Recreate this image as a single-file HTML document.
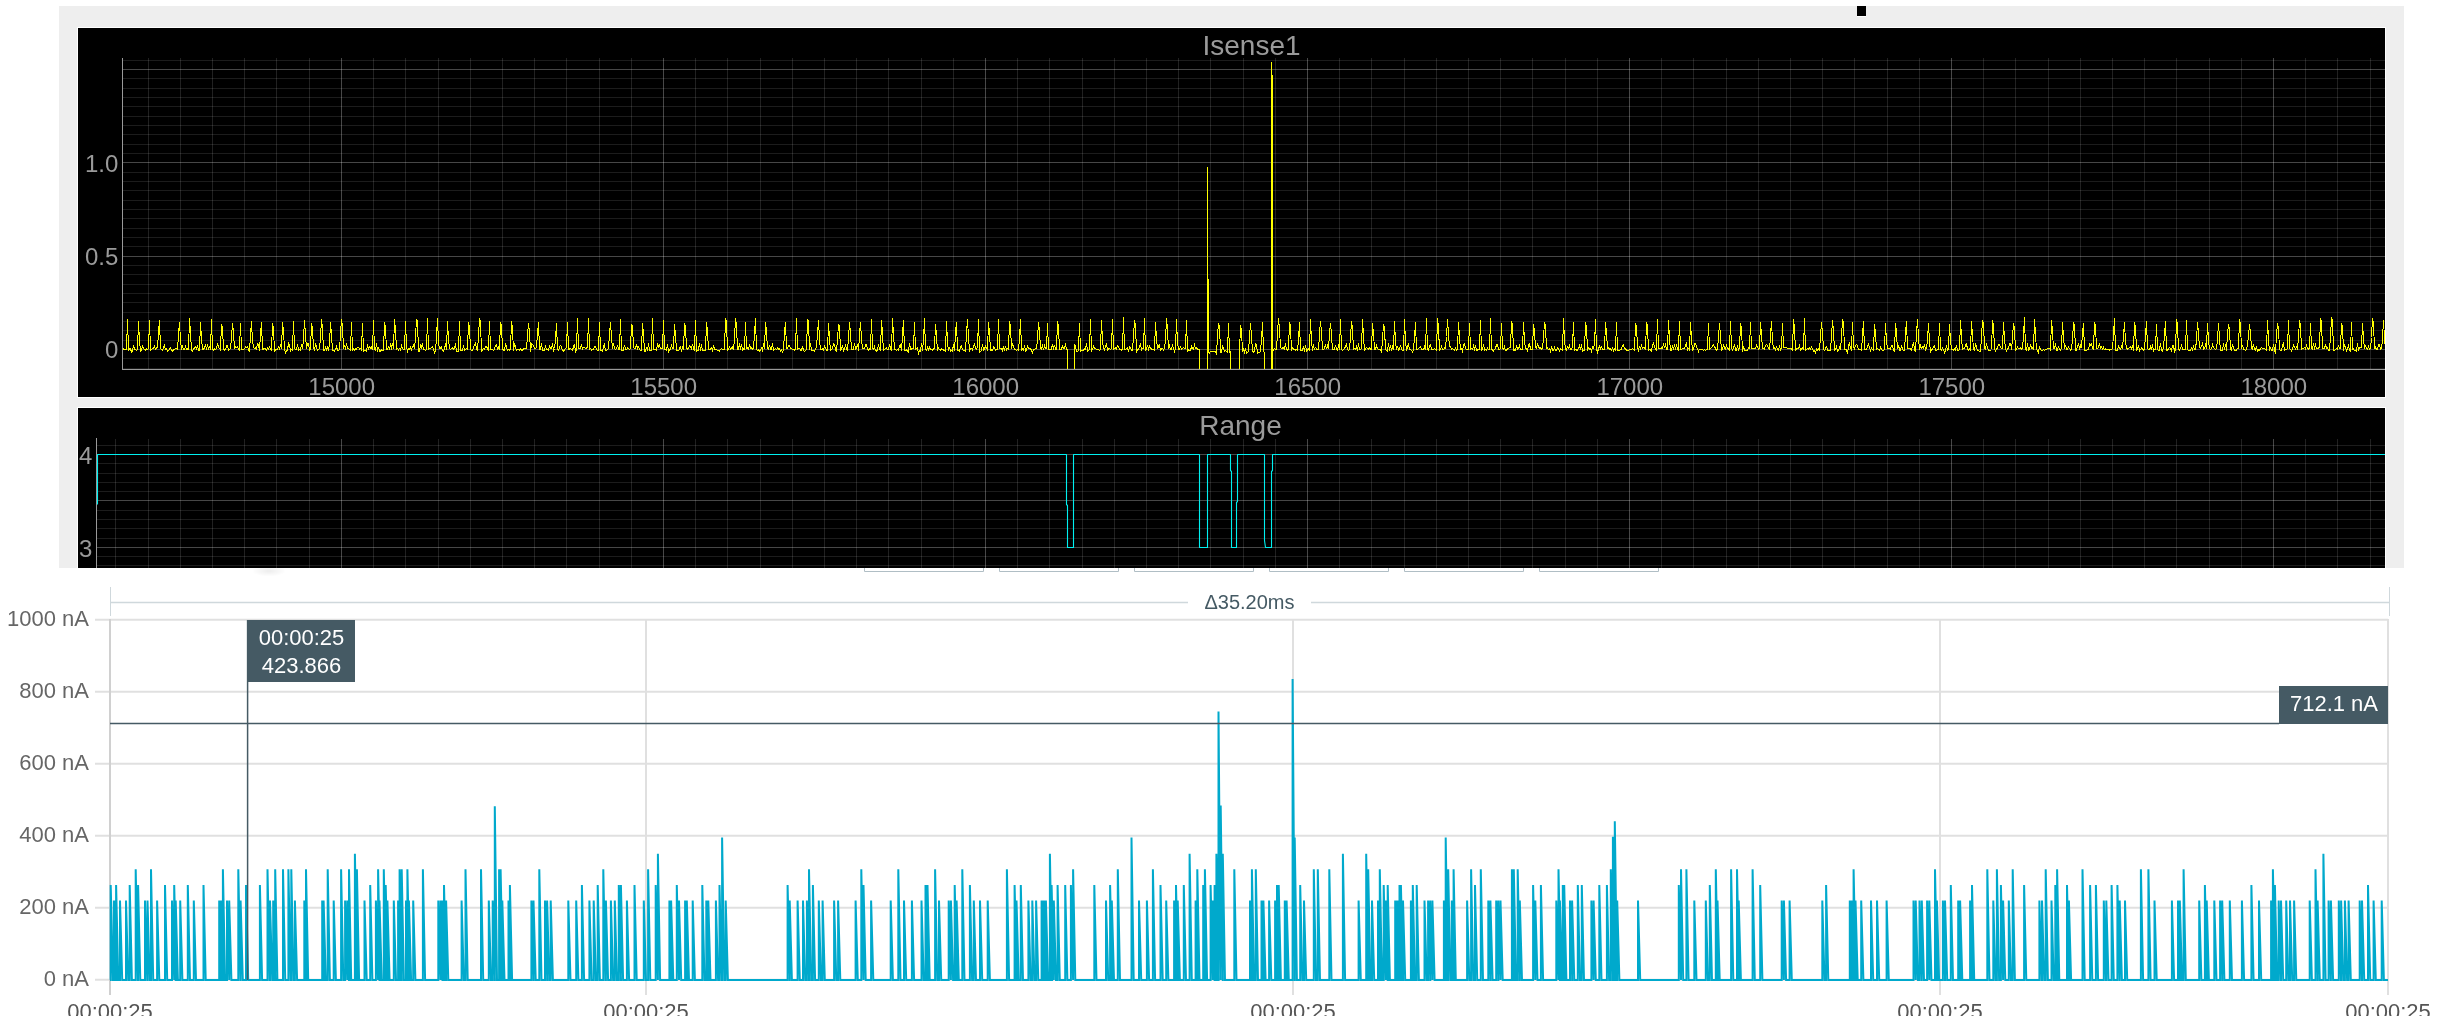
<!DOCTYPE html>
<html><head><meta charset="utf-8"><title>Isense1</title>
<style>html,body{margin:0;padding:0;background:#fff;width:2443px;height:1016px;overflow:hidden}svg{display:block;will-change:transform}</style>
</head><body><svg width="2443" height="1016" viewBox="0 0 2443 1016"><rect x="59" y="6" width="2345" height="562" fill="#eeeeee"/>
<rect x="1857" y="6" width="9" height="10" fill="#000"/>
<rect x="1857" y="16" width="9" height="1" fill="#fff"/>
<rect x="77" y="27" width="2309" height="371" fill="#ffffff"/>
<rect x="78" y="28" width="2307" height="369" fill="#000000"/>
<rect x="77" y="407" width="2309" height="161" fill="#ffffff"/>
<rect x="78" y="408" width="2307" height="160" fill="#000000"/>
<line x1="122.4" x2="2385" y1="368.5" y2="368.5" stroke="rgba(255,255,255,0.11)" stroke-width="1"/>
<line x1="122.4" x2="2385" y1="358.5" y2="358.5" stroke="rgba(255,255,255,0.11)" stroke-width="1"/>
<line x1="122.4" x2="2385" y1="340.5" y2="340.5" stroke="rgba(255,255,255,0.11)" stroke-width="1"/>
<line x1="122.4" x2="2385" y1="330.5" y2="330.5" stroke="rgba(255,255,255,0.11)" stroke-width="1"/>
<line x1="122.4" x2="2385" y1="321.5" y2="321.5" stroke="rgba(255,255,255,0.11)" stroke-width="1"/>
<line x1="122.4" x2="2385" y1="312.5" y2="312.5" stroke="rgba(255,255,255,0.11)" stroke-width="1"/>
<line x1="122.4" x2="2385" y1="302.5" y2="302.5" stroke="rgba(255,255,255,0.11)" stroke-width="1"/>
<line x1="122.4" x2="2385" y1="293.5" y2="293.5" stroke="rgba(255,255,255,0.11)" stroke-width="1"/>
<line x1="122.4" x2="2385" y1="284.5" y2="284.5" stroke="rgba(255,255,255,0.11)" stroke-width="1"/>
<line x1="122.4" x2="2385" y1="274.5" y2="274.5" stroke="rgba(255,255,255,0.11)" stroke-width="1"/>
<line x1="122.4" x2="2385" y1="265.5" y2="265.5" stroke="rgba(255,255,255,0.11)" stroke-width="1"/>
<line x1="122.4" x2="2385" y1="246.5" y2="246.5" stroke="rgba(255,255,255,0.11)" stroke-width="1"/>
<line x1="122.4" x2="2385" y1="237.5" y2="237.5" stroke="rgba(255,255,255,0.11)" stroke-width="1"/>
<line x1="122.4" x2="2385" y1="228.5" y2="228.5" stroke="rgba(255,255,255,0.11)" stroke-width="1"/>
<line x1="122.4" x2="2385" y1="218.5" y2="218.5" stroke="rgba(255,255,255,0.11)" stroke-width="1"/>
<line x1="122.4" x2="2385" y1="209.5" y2="209.5" stroke="rgba(255,255,255,0.11)" stroke-width="1"/>
<line x1="122.4" x2="2385" y1="200.5" y2="200.5" stroke="rgba(255,255,255,0.11)" stroke-width="1"/>
<line x1="122.4" x2="2385" y1="190.5" y2="190.5" stroke="rgba(255,255,255,0.11)" stroke-width="1"/>
<line x1="122.4" x2="2385" y1="181.5" y2="181.5" stroke="rgba(255,255,255,0.11)" stroke-width="1"/>
<line x1="122.4" x2="2385" y1="172.5" y2="172.5" stroke="rgba(255,255,255,0.11)" stroke-width="1"/>
<line x1="122.4" x2="2385" y1="153.5" y2="153.5" stroke="rgba(255,255,255,0.11)" stroke-width="1"/>
<line x1="122.4" x2="2385" y1="144.5" y2="144.5" stroke="rgba(255,255,255,0.11)" stroke-width="1"/>
<line x1="122.4" x2="2385" y1="134.5" y2="134.5" stroke="rgba(255,255,255,0.11)" stroke-width="1"/>
<line x1="122.4" x2="2385" y1="125.5" y2="125.5" stroke="rgba(255,255,255,0.11)" stroke-width="1"/>
<line x1="122.4" x2="2385" y1="116.5" y2="116.5" stroke="rgba(255,255,255,0.11)" stroke-width="1"/>
<line x1="122.4" x2="2385" y1="106.5" y2="106.5" stroke="rgba(255,255,255,0.11)" stroke-width="1"/>
<line x1="122.4" x2="2385" y1="97.5" y2="97.5" stroke="rgba(255,255,255,0.11)" stroke-width="1"/>
<line x1="122.4" x2="2385" y1="88.5" y2="88.5" stroke="rgba(255,255,255,0.11)" stroke-width="1"/>
<line x1="122.4" x2="2385" y1="78.5" y2="78.5" stroke="rgba(255,255,255,0.11)" stroke-width="1"/>
<line x1="122.4" x2="2385" y1="60.5" y2="60.5" stroke="rgba(255,255,255,0.11)" stroke-width="1"/>
<line x1="148.5" x2="148.5" y1="58" y2="369.4" stroke="rgba(255,255,255,0.13)" stroke-width="1"/>
<line x1="180.5" x2="180.5" y1="58" y2="369.4" stroke="rgba(255,255,255,0.13)" stroke-width="1"/>
<line x1="212.5" x2="212.5" y1="58" y2="369.4" stroke="rgba(255,255,255,0.13)" stroke-width="1"/>
<line x1="244.5" x2="244.5" y1="58" y2="369.4" stroke="rgba(255,255,255,0.13)" stroke-width="1"/>
<line x1="276.5" x2="276.5" y1="58" y2="369.4" stroke="rgba(255,255,255,0.13)" stroke-width="1"/>
<line x1="309.5" x2="309.5" y1="58" y2="369.4" stroke="rgba(255,255,255,0.13)" stroke-width="1"/>
<line x1="373.5" x2="373.5" y1="58" y2="369.4" stroke="rgba(255,255,255,0.13)" stroke-width="1"/>
<line x1="405.5" x2="405.5" y1="58" y2="369.4" stroke="rgba(255,255,255,0.13)" stroke-width="1"/>
<line x1="438.5" x2="438.5" y1="58" y2="369.4" stroke="rgba(255,255,255,0.13)" stroke-width="1"/>
<line x1="470.5" x2="470.5" y1="58" y2="369.4" stroke="rgba(255,255,255,0.13)" stroke-width="1"/>
<line x1="502.5" x2="502.5" y1="58" y2="369.4" stroke="rgba(255,255,255,0.13)" stroke-width="1"/>
<line x1="534.5" x2="534.5" y1="58" y2="369.4" stroke="rgba(255,255,255,0.13)" stroke-width="1"/>
<line x1="566.5" x2="566.5" y1="58" y2="369.4" stroke="rgba(255,255,255,0.13)" stroke-width="1"/>
<line x1="599.5" x2="599.5" y1="58" y2="369.4" stroke="rgba(255,255,255,0.13)" stroke-width="1"/>
<line x1="631.5" x2="631.5" y1="58" y2="369.4" stroke="rgba(255,255,255,0.13)" stroke-width="1"/>
<line x1="695.5" x2="695.5" y1="58" y2="369.4" stroke="rgba(255,255,255,0.13)" stroke-width="1"/>
<line x1="727.5" x2="727.5" y1="58" y2="369.4" stroke="rgba(255,255,255,0.13)" stroke-width="1"/>
<line x1="760.5" x2="760.5" y1="58" y2="369.4" stroke="rgba(255,255,255,0.13)" stroke-width="1"/>
<line x1="792.5" x2="792.5" y1="58" y2="369.4" stroke="rgba(255,255,255,0.13)" stroke-width="1"/>
<line x1="824.5" x2="824.5" y1="58" y2="369.4" stroke="rgba(255,255,255,0.13)" stroke-width="1"/>
<line x1="856.5" x2="856.5" y1="58" y2="369.4" stroke="rgba(255,255,255,0.13)" stroke-width="1"/>
<line x1="888.5" x2="888.5" y1="58" y2="369.4" stroke="rgba(255,255,255,0.13)" stroke-width="1"/>
<line x1="921.5" x2="921.5" y1="58" y2="369.4" stroke="rgba(255,255,255,0.13)" stroke-width="1"/>
<line x1="953.5" x2="953.5" y1="58" y2="369.4" stroke="rgba(255,255,255,0.13)" stroke-width="1"/>
<line x1="1017.5" x2="1017.5" y1="58" y2="369.4" stroke="rgba(255,255,255,0.13)" stroke-width="1"/>
<line x1="1049.5" x2="1049.5" y1="58" y2="369.4" stroke="rgba(255,255,255,0.13)" stroke-width="1"/>
<line x1="1082.5" x2="1082.5" y1="58" y2="369.4" stroke="rgba(255,255,255,0.13)" stroke-width="1"/>
<line x1="1114.5" x2="1114.5" y1="58" y2="369.4" stroke="rgba(255,255,255,0.13)" stroke-width="1"/>
<line x1="1146.5" x2="1146.5" y1="58" y2="369.4" stroke="rgba(255,255,255,0.13)" stroke-width="1"/>
<line x1="1178.5" x2="1178.5" y1="58" y2="369.4" stroke="rgba(255,255,255,0.13)" stroke-width="1"/>
<line x1="1210.5" x2="1210.5" y1="58" y2="369.4" stroke="rgba(255,255,255,0.13)" stroke-width="1"/>
<line x1="1243.5" x2="1243.5" y1="58" y2="369.4" stroke="rgba(255,255,255,0.13)" stroke-width="1"/>
<line x1="1275.5" x2="1275.5" y1="58" y2="369.4" stroke="rgba(255,255,255,0.13)" stroke-width="1"/>
<line x1="1339.5" x2="1339.5" y1="58" y2="369.4" stroke="rgba(255,255,255,0.13)" stroke-width="1"/>
<line x1="1371.5" x2="1371.5" y1="58" y2="369.4" stroke="rgba(255,255,255,0.13)" stroke-width="1"/>
<line x1="1404.5" x2="1404.5" y1="58" y2="369.4" stroke="rgba(255,255,255,0.13)" stroke-width="1"/>
<line x1="1436.5" x2="1436.5" y1="58" y2="369.4" stroke="rgba(255,255,255,0.13)" stroke-width="1"/>
<line x1="1468.5" x2="1468.5" y1="58" y2="369.4" stroke="rgba(255,255,255,0.13)" stroke-width="1"/>
<line x1="1500.5" x2="1500.5" y1="58" y2="369.4" stroke="rgba(255,255,255,0.13)" stroke-width="1"/>
<line x1="1532.5" x2="1532.5" y1="58" y2="369.4" stroke="rgba(255,255,255,0.13)" stroke-width="1"/>
<line x1="1565.5" x2="1565.5" y1="58" y2="369.4" stroke="rgba(255,255,255,0.13)" stroke-width="1"/>
<line x1="1597.5" x2="1597.5" y1="58" y2="369.4" stroke="rgba(255,255,255,0.13)" stroke-width="1"/>
<line x1="1661.5" x2="1661.5" y1="58" y2="369.4" stroke="rgba(255,255,255,0.13)" stroke-width="1"/>
<line x1="1693.5" x2="1693.5" y1="58" y2="369.4" stroke="rgba(255,255,255,0.13)" stroke-width="1"/>
<line x1="1726.5" x2="1726.5" y1="58" y2="369.4" stroke="rgba(255,255,255,0.13)" stroke-width="1"/>
<line x1="1758.5" x2="1758.5" y1="58" y2="369.4" stroke="rgba(255,255,255,0.13)" stroke-width="1"/>
<line x1="1790.5" x2="1790.5" y1="58" y2="369.4" stroke="rgba(255,255,255,0.13)" stroke-width="1"/>
<line x1="1822.5" x2="1822.5" y1="58" y2="369.4" stroke="rgba(255,255,255,0.13)" stroke-width="1"/>
<line x1="1854.5" x2="1854.5" y1="58" y2="369.4" stroke="rgba(255,255,255,0.13)" stroke-width="1"/>
<line x1="1887.5" x2="1887.5" y1="58" y2="369.4" stroke="rgba(255,255,255,0.13)" stroke-width="1"/>
<line x1="1919.5" x2="1919.5" y1="58" y2="369.4" stroke="rgba(255,255,255,0.13)" stroke-width="1"/>
<line x1="1983.5" x2="1983.5" y1="58" y2="369.4" stroke="rgba(255,255,255,0.13)" stroke-width="1"/>
<line x1="2015.5" x2="2015.5" y1="58" y2="369.4" stroke="rgba(255,255,255,0.13)" stroke-width="1"/>
<line x1="2048.5" x2="2048.5" y1="58" y2="369.4" stroke="rgba(255,255,255,0.13)" stroke-width="1"/>
<line x1="2080.5" x2="2080.5" y1="58" y2="369.4" stroke="rgba(255,255,255,0.13)" stroke-width="1"/>
<line x1="2112.5" x2="2112.5" y1="58" y2="369.4" stroke="rgba(255,255,255,0.13)" stroke-width="1"/>
<line x1="2144.5" x2="2144.5" y1="58" y2="369.4" stroke="rgba(255,255,255,0.13)" stroke-width="1"/>
<line x1="2176.5" x2="2176.5" y1="58" y2="369.4" stroke="rgba(255,255,255,0.13)" stroke-width="1"/>
<line x1="2209.5" x2="2209.5" y1="58" y2="369.4" stroke="rgba(255,255,255,0.13)" stroke-width="1"/>
<line x1="2241.5" x2="2241.5" y1="58" y2="369.4" stroke="rgba(255,255,255,0.13)" stroke-width="1"/>
<line x1="2305.5" x2="2305.5" y1="58" y2="369.4" stroke="rgba(255,255,255,0.13)" stroke-width="1"/>
<line x1="2337.5" x2="2337.5" y1="58" y2="369.4" stroke="rgba(255,255,255,0.13)" stroke-width="1"/>
<line x1="2370.5" x2="2370.5" y1="58" y2="369.4" stroke="rgba(255,255,255,0.13)" stroke-width="1"/>
<line x1="122.4" x2="2385" y1="349.5" y2="349.5" stroke="rgba(255,255,255,0.28)" stroke-width="1"/>
<line x1="122.4" x2="2385" y1="256.5" y2="256.5" stroke="rgba(255,255,255,0.28)" stroke-width="1"/>
<line x1="122.4" x2="2385" y1="162.5" y2="162.5" stroke="rgba(255,255,255,0.28)" stroke-width="1"/>
<line x1="122.4" x2="2385" y1="69.5" y2="69.5" stroke="rgba(255,255,255,0.28)" stroke-width="1"/>
<line x1="341.5" x2="341.5" y1="58" y2="369.4" stroke="rgba(255,255,255,0.28)" stroke-width="1"/>
<line x1="663.5" x2="663.5" y1="58" y2="369.4" stroke="rgba(255,255,255,0.28)" stroke-width="1"/>
<line x1="985.5" x2="985.5" y1="58" y2="369.4" stroke="rgba(255,255,255,0.28)" stroke-width="1"/>
<line x1="1307.5" x2="1307.5" y1="58" y2="369.4" stroke="rgba(255,255,255,0.28)" stroke-width="1"/>
<line x1="1629.5" x2="1629.5" y1="58" y2="369.4" stroke="rgba(255,255,255,0.28)" stroke-width="1"/>
<line x1="1951.5" x2="1951.5" y1="58" y2="369.4" stroke="rgba(255,255,255,0.28)" stroke-width="1"/>
<line x1="2273.5" x2="2273.5" y1="58" y2="369.4" stroke="rgba(255,255,255,0.28)" stroke-width="1"/>
<line x1="122.5" x2="122.5" y1="58" y2="370" stroke="#9a9a9a" stroke-width="1"/>
<line x1="122" x2="2385" y1="369.5" y2="369.5" stroke="#9a9a9a" stroke-width="1"/>
<line x1="96.4" x2="2385" y1="565.5" y2="565.5" stroke="rgba(255,255,255,0.11)" stroke-width="1"/>
<line x1="96.4" x2="2385" y1="556.5" y2="556.5" stroke="rgba(255,255,255,0.11)" stroke-width="1"/>
<line x1="96.4" x2="2385" y1="538.5" y2="538.5" stroke="rgba(255,255,255,0.11)" stroke-width="1"/>
<line x1="96.4" x2="2385" y1="528.5" y2="528.5" stroke="rgba(255,255,255,0.11)" stroke-width="1"/>
<line x1="96.4" x2="2385" y1="519.5" y2="519.5" stroke="rgba(255,255,255,0.11)" stroke-width="1"/>
<line x1="96.4" x2="2385" y1="510.5" y2="510.5" stroke="rgba(255,255,255,0.11)" stroke-width="1"/>
<line x1="96.4" x2="2385" y1="491.5" y2="491.5" stroke="rgba(255,255,255,0.11)" stroke-width="1"/>
<line x1="96.4" x2="2385" y1="482.5" y2="482.5" stroke="rgba(255,255,255,0.11)" stroke-width="1"/>
<line x1="96.4" x2="2385" y1="473.5" y2="473.5" stroke="rgba(255,255,255,0.11)" stroke-width="1"/>
<line x1="96.4" x2="2385" y1="463.5" y2="463.5" stroke="rgba(255,255,255,0.11)" stroke-width="1"/>
<line x1="96.4" x2="2385" y1="445.5" y2="445.5" stroke="rgba(255,255,255,0.11)" stroke-width="1"/>
<line x1="115.5" x2="115.5" y1="439" y2="568" stroke="rgba(255,255,255,0.13)" stroke-width="1"/>
<line x1="148.5" x2="148.5" y1="439" y2="568" stroke="rgba(255,255,255,0.13)" stroke-width="1"/>
<line x1="180.5" x2="180.5" y1="439" y2="568" stroke="rgba(255,255,255,0.13)" stroke-width="1"/>
<line x1="212.5" x2="212.5" y1="439" y2="568" stroke="rgba(255,255,255,0.13)" stroke-width="1"/>
<line x1="244.5" x2="244.5" y1="439" y2="568" stroke="rgba(255,255,255,0.13)" stroke-width="1"/>
<line x1="276.5" x2="276.5" y1="439" y2="568" stroke="rgba(255,255,255,0.13)" stroke-width="1"/>
<line x1="309.5" x2="309.5" y1="439" y2="568" stroke="rgba(255,255,255,0.13)" stroke-width="1"/>
<line x1="373.5" x2="373.5" y1="439" y2="568" stroke="rgba(255,255,255,0.13)" stroke-width="1"/>
<line x1="405.5" x2="405.5" y1="439" y2="568" stroke="rgba(255,255,255,0.13)" stroke-width="1"/>
<line x1="438.5" x2="438.5" y1="439" y2="568" stroke="rgba(255,255,255,0.13)" stroke-width="1"/>
<line x1="470.5" x2="470.5" y1="439" y2="568" stroke="rgba(255,255,255,0.13)" stroke-width="1"/>
<line x1="502.5" x2="502.5" y1="439" y2="568" stroke="rgba(255,255,255,0.13)" stroke-width="1"/>
<line x1="534.5" x2="534.5" y1="439" y2="568" stroke="rgba(255,255,255,0.13)" stroke-width="1"/>
<line x1="566.5" x2="566.5" y1="439" y2="568" stroke="rgba(255,255,255,0.13)" stroke-width="1"/>
<line x1="599.5" x2="599.5" y1="439" y2="568" stroke="rgba(255,255,255,0.13)" stroke-width="1"/>
<line x1="631.5" x2="631.5" y1="439" y2="568" stroke="rgba(255,255,255,0.13)" stroke-width="1"/>
<line x1="695.5" x2="695.5" y1="439" y2="568" stroke="rgba(255,255,255,0.13)" stroke-width="1"/>
<line x1="727.5" x2="727.5" y1="439" y2="568" stroke="rgba(255,255,255,0.13)" stroke-width="1"/>
<line x1="760.5" x2="760.5" y1="439" y2="568" stroke="rgba(255,255,255,0.13)" stroke-width="1"/>
<line x1="792.5" x2="792.5" y1="439" y2="568" stroke="rgba(255,255,255,0.13)" stroke-width="1"/>
<line x1="824.5" x2="824.5" y1="439" y2="568" stroke="rgba(255,255,255,0.13)" stroke-width="1"/>
<line x1="856.5" x2="856.5" y1="439" y2="568" stroke="rgba(255,255,255,0.13)" stroke-width="1"/>
<line x1="888.5" x2="888.5" y1="439" y2="568" stroke="rgba(255,255,255,0.13)" stroke-width="1"/>
<line x1="921.5" x2="921.5" y1="439" y2="568" stroke="rgba(255,255,255,0.13)" stroke-width="1"/>
<line x1="953.5" x2="953.5" y1="439" y2="568" stroke="rgba(255,255,255,0.13)" stroke-width="1"/>
<line x1="1017.5" x2="1017.5" y1="439" y2="568" stroke="rgba(255,255,255,0.13)" stroke-width="1"/>
<line x1="1049.5" x2="1049.5" y1="439" y2="568" stroke="rgba(255,255,255,0.13)" stroke-width="1"/>
<line x1="1082.5" x2="1082.5" y1="439" y2="568" stroke="rgba(255,255,255,0.13)" stroke-width="1"/>
<line x1="1114.5" x2="1114.5" y1="439" y2="568" stroke="rgba(255,255,255,0.13)" stroke-width="1"/>
<line x1="1146.5" x2="1146.5" y1="439" y2="568" stroke="rgba(255,255,255,0.13)" stroke-width="1"/>
<line x1="1178.5" x2="1178.5" y1="439" y2="568" stroke="rgba(255,255,255,0.13)" stroke-width="1"/>
<line x1="1210.5" x2="1210.5" y1="439" y2="568" stroke="rgba(255,255,255,0.13)" stroke-width="1"/>
<line x1="1243.5" x2="1243.5" y1="439" y2="568" stroke="rgba(255,255,255,0.13)" stroke-width="1"/>
<line x1="1275.5" x2="1275.5" y1="439" y2="568" stroke="rgba(255,255,255,0.13)" stroke-width="1"/>
<line x1="1339.5" x2="1339.5" y1="439" y2="568" stroke="rgba(255,255,255,0.13)" stroke-width="1"/>
<line x1="1371.5" x2="1371.5" y1="439" y2="568" stroke="rgba(255,255,255,0.13)" stroke-width="1"/>
<line x1="1404.5" x2="1404.5" y1="439" y2="568" stroke="rgba(255,255,255,0.13)" stroke-width="1"/>
<line x1="1436.5" x2="1436.5" y1="439" y2="568" stroke="rgba(255,255,255,0.13)" stroke-width="1"/>
<line x1="1468.5" x2="1468.5" y1="439" y2="568" stroke="rgba(255,255,255,0.13)" stroke-width="1"/>
<line x1="1500.5" x2="1500.5" y1="439" y2="568" stroke="rgba(255,255,255,0.13)" stroke-width="1"/>
<line x1="1532.5" x2="1532.5" y1="439" y2="568" stroke="rgba(255,255,255,0.13)" stroke-width="1"/>
<line x1="1565.5" x2="1565.5" y1="439" y2="568" stroke="rgba(255,255,255,0.13)" stroke-width="1"/>
<line x1="1597.5" x2="1597.5" y1="439" y2="568" stroke="rgba(255,255,255,0.13)" stroke-width="1"/>
<line x1="1661.5" x2="1661.5" y1="439" y2="568" stroke="rgba(255,255,255,0.13)" stroke-width="1"/>
<line x1="1693.5" x2="1693.5" y1="439" y2="568" stroke="rgba(255,255,255,0.13)" stroke-width="1"/>
<line x1="1726.5" x2="1726.5" y1="439" y2="568" stroke="rgba(255,255,255,0.13)" stroke-width="1"/>
<line x1="1758.5" x2="1758.5" y1="439" y2="568" stroke="rgba(255,255,255,0.13)" stroke-width="1"/>
<line x1="1790.5" x2="1790.5" y1="439" y2="568" stroke="rgba(255,255,255,0.13)" stroke-width="1"/>
<line x1="1822.5" x2="1822.5" y1="439" y2="568" stroke="rgba(255,255,255,0.13)" stroke-width="1"/>
<line x1="1854.5" x2="1854.5" y1="439" y2="568" stroke="rgba(255,255,255,0.13)" stroke-width="1"/>
<line x1="1887.5" x2="1887.5" y1="439" y2="568" stroke="rgba(255,255,255,0.13)" stroke-width="1"/>
<line x1="1919.5" x2="1919.5" y1="439" y2="568" stroke="rgba(255,255,255,0.13)" stroke-width="1"/>
<line x1="1983.5" x2="1983.5" y1="439" y2="568" stroke="rgba(255,255,255,0.13)" stroke-width="1"/>
<line x1="2015.5" x2="2015.5" y1="439" y2="568" stroke="rgba(255,255,255,0.13)" stroke-width="1"/>
<line x1="2048.5" x2="2048.5" y1="439" y2="568" stroke="rgba(255,255,255,0.13)" stroke-width="1"/>
<line x1="2080.5" x2="2080.5" y1="439" y2="568" stroke="rgba(255,255,255,0.13)" stroke-width="1"/>
<line x1="2112.5" x2="2112.5" y1="439" y2="568" stroke="rgba(255,255,255,0.13)" stroke-width="1"/>
<line x1="2144.5" x2="2144.5" y1="439" y2="568" stroke="rgba(255,255,255,0.13)" stroke-width="1"/>
<line x1="2176.5" x2="2176.5" y1="439" y2="568" stroke="rgba(255,255,255,0.13)" stroke-width="1"/>
<line x1="2209.5" x2="2209.5" y1="439" y2="568" stroke="rgba(255,255,255,0.13)" stroke-width="1"/>
<line x1="2241.5" x2="2241.5" y1="439" y2="568" stroke="rgba(255,255,255,0.13)" stroke-width="1"/>
<line x1="2305.5" x2="2305.5" y1="439" y2="568" stroke="rgba(255,255,255,0.13)" stroke-width="1"/>
<line x1="2337.5" x2="2337.5" y1="439" y2="568" stroke="rgba(255,255,255,0.13)" stroke-width="1"/>
<line x1="2370.5" x2="2370.5" y1="439" y2="568" stroke="rgba(255,255,255,0.13)" stroke-width="1"/>
<line x1="96.4" x2="2385" y1="547.5" y2="547.5" stroke="rgba(255,255,255,0.28)" stroke-width="1"/>
<line x1="96.4" x2="2385" y1="500.5" y2="500.5" stroke="rgba(255,255,255,0.28)" stroke-width="1"/>
<line x1="96.4" x2="2385" y1="454.5" y2="454.5" stroke="rgba(255,255,255,0.28)" stroke-width="1"/>
<line x1="341.5" x2="341.5" y1="439" y2="568" stroke="rgba(255,255,255,0.28)" stroke-width="1"/>
<line x1="663.5" x2="663.5" y1="439" y2="568" stroke="rgba(255,255,255,0.28)" stroke-width="1"/>
<line x1="985.5" x2="985.5" y1="439" y2="568" stroke="rgba(255,255,255,0.28)" stroke-width="1"/>
<line x1="1307.5" x2="1307.5" y1="439" y2="568" stroke="rgba(255,255,255,0.28)" stroke-width="1"/>
<line x1="1629.5" x2="1629.5" y1="439" y2="568" stroke="rgba(255,255,255,0.28)" stroke-width="1"/>
<line x1="1951.5" x2="1951.5" y1="439" y2="568" stroke="rgba(255,255,255,0.28)" stroke-width="1"/>
<line x1="2273.5" x2="2273.5" y1="439" y2="568" stroke="rgba(255,255,255,0.28)" stroke-width="1"/>
<line x1="96.5" x2="96.5" y1="438" y2="568" stroke="#9a9a9a" stroke-width="1"/>
<clipPath id="c1"><rect x="123" y="28" width="2262" height="341"/></clipPath>
<path clip-path="url(#c1)" fill="none" stroke="#ffff00" stroke-width="1" shape-rendering="crispEdges" d="M122.5,351.3 123.5,349.0 124.5,349.4 125.5,349.3 126.5,349.6 127.5,319.5 128.5,350.2 129.5,348.6 130.5,348.6 131.5,352.3 132.5,350.5 133.5,345.0 134.5,349.5 135.5,349.6 136.5,350.4 137.5,349.3 138.5,320.6 139.5,341.4 140.5,351.1 141.5,349.8 142.5,346.3 143.5,348.4 144.5,349.6 145.5,350.1 146.5,348.8 147.5,349.4 148.5,348.8 149.5,319.9 150.5,350.6 151.5,349.6 152.5,348.1 153.5,348.2 154.5,345.9 155.5,349.3 156.5,348.8 157.5,346.4 158.5,333.1 159.5,319.7 160.5,348.4 161.5,349.3 162.5,350.4 163.5,347.7 164.5,345.6 165.5,349.8 166.5,348.9 167.5,351.7 168.5,350.5 169.5,349.5 170.5,347.7 171.5,350.3 172.5,351.4 173.5,349.6 174.5,349.2 175.5,348.7 176.5,348.4 177.5,349.2 178.5,334.6 179.5,321.8 180.5,340.5 181.5,348.4 182.5,345.9 183.5,349.9 184.5,349.9 185.5,346.7 186.5,349.8 187.5,348.9 188.5,349.6 189.5,318.4 190.5,332.8 191.5,350.7 192.5,351.7 193.5,348.3 194.5,348.4 195.5,346.9 196.5,348.6 197.5,346.1 198.5,350.6 199.5,350.3 200.5,322.3 201.5,337.9 202.5,349.5 203.5,349.0 204.5,348.6 205.5,343.8 206.5,350.4 207.5,344.3 208.5,348.9 209.5,347.1 210.5,348.8 211.5,318.9 212.5,349.8 213.5,350.0 214.5,348.7 215.5,349.6 216.5,348.4 217.5,343.2 218.5,347.1 219.5,348.7 220.5,349.8 221.5,323.7 222.5,328.0 223.5,349.1 224.5,350.1 225.5,349.9 226.5,345.8 227.5,345.6 228.5,350.1 229.5,349.4 230.5,348.5 231.5,337.2 232.5,323.3 233.5,332.1 234.5,349.1 235.5,347.0 236.5,347.1 237.5,347.0 238.5,349.1 239.5,350.3 240.5,323.5 241.5,349.1 242.5,349.3 243.5,349.7 244.5,348.7 245.5,346.9 246.5,347.2 247.5,346.5 248.5,350.2 249.5,351.0 250.5,334.8 251.5,321.2 252.5,341.5 253.5,346.9 254.5,348.8 255.5,348.0 256.5,349.4 257.5,343.3 258.5,344.4 259.5,350.7 260.5,334.5 261.5,321.6 262.5,349.8 263.5,349.0 264.5,348.2 265.5,349.0 266.5,350.4 267.5,347.9 268.5,348.9 269.5,347.2 270.5,349.4 271.5,350.5 272.5,323.4 273.5,328.9 274.5,351.2 275.5,349.6 276.5,349.6 277.5,349.9 278.5,346.0 279.5,350.3 280.5,344.5 281.5,349.0 282.5,322.3 283.5,331.8 284.5,348.7 285.5,352.7 286.5,350.6 287.5,350.1 288.5,343.0 289.5,345.5 290.5,351.2 291.5,349.3 292.5,350.5 293.5,320.9 294.5,348.8 295.5,349.1 296.5,349.4 297.5,344.1 298.5,350.1 299.5,349.5 300.5,350.3 301.5,343.9 302.5,349.0 303.5,338.8 304.5,320.4 305.5,334.8 306.5,348.6 307.5,343.5 308.5,343.2 309.5,350.2 310.5,348.8 311.5,323.3 312.5,329.3 313.5,348.4 314.5,350.0 315.5,344.2 316.5,346.7 317.5,350.6 318.5,349.2 319.5,348.4 320.5,337.3 321.5,319.0 322.5,328.2 323.5,350.9 324.5,350.9 325.5,347.5 326.5,349.8 327.5,347.5 328.5,349.6 329.5,344.8 330.5,322.4 331.5,334.5 332.5,350.3 333.5,350.9 334.5,351.1 335.5,349.3 336.5,346.2 337.5,350.8 338.5,350.8 339.5,349.4 340.5,333.9 341.5,319.1 342.5,327.1 343.5,348.7 344.5,346.2 345.5,348.3 346.5,343.6 347.5,348.1 348.5,348.8 349.5,349.8 350.5,350.4 351.5,322.2 352.5,349.9 353.5,348.7 354.5,350.3 355.5,348.9 356.5,349.2 357.5,347.3 358.5,347.4 359.5,349.3 360.5,348.6 361.5,349.9 362.5,322.8 363.5,351.2 364.5,350.1 365.5,350.4 366.5,351.2 367.5,344.3 368.5,350.4 369.5,346.6 370.5,348.0 371.5,347.1 372.5,350.1 373.5,320.4 374.5,349.5 375.5,350.6 376.5,343.3 377.5,351.5 378.5,347.0 379.5,351.1 380.5,351.4 381.5,349.9 382.5,350.6 383.5,350.4 384.5,321.6 385.5,329.1 386.5,349.7 387.5,348.9 388.5,347.4 389.5,348.9 390.5,345.0 391.5,348.0 392.5,343.1 393.5,348.9 394.5,318.9 395.5,330.3 396.5,349.4 397.5,348.5 398.5,350.0 399.5,348.6 400.5,350.0 401.5,345.9 402.5,348.8 403.5,349.7 404.5,349.4 405.5,320.8 406.5,346.1 407.5,351.2 408.5,348.5 409.5,349.4 410.5,347.4 411.5,349.9 412.5,346.5 413.5,345.1 414.5,349.0 415.5,337.0 416.5,318.9 417.5,321.1 418.5,351.3 419.5,351.8 420.5,344.5 421.5,347.6 422.5,343.4 423.5,349.5 424.5,349.8 425.5,350.5 426.5,349.5 427.5,318.4 428.5,349.6 429.5,348.5 430.5,348.9 431.5,347.1 432.5,346.8 433.5,348.9 434.5,352.8 435.5,351.0 436.5,337.2 437.5,318.2 438.5,342.2 439.5,348.8 440.5,348.3 441.5,347.1 442.5,350.5 443.5,351.0 444.5,349.3 445.5,343.4 446.5,350.0 447.5,321.0 448.5,339.2 449.5,348.9 450.5,349.5 451.5,348.6 452.5,348.0 453.5,349.4 454.5,347.9 455.5,343.5 456.5,351.8 457.5,351.7 458.5,351.3 459.5,320.6 460.5,349.8 461.5,350.9 462.5,350.3 463.5,345.3 464.5,350.6 465.5,349.4 466.5,348.9 467.5,349.2 468.5,322.4 469.5,327.6 470.5,349.5 471.5,350.1 472.5,350.1 473.5,347.3 474.5,344.6 475.5,343.1 476.5,349.6 477.5,350.0 478.5,336.4 479.5,317.8 480.5,322.8 481.5,351.3 482.5,349.5 483.5,348.4 484.5,349.2 485.5,346.2 486.5,346.4 487.5,348.7 488.5,350.0 489.5,321.5 490.5,348.9 491.5,349.6 492.5,349.2 493.5,350.5 494.5,349.3 495.5,345.6 496.5,344.8 497.5,349.1 498.5,347.4 499.5,349.7 500.5,322.0 501.5,325.6 502.5,349.9 503.5,349.9 504.5,350.8 505.5,343.1 506.5,346.7 507.5,350.3 508.5,349.7 509.5,350.3 510.5,349.1 511.5,321.0 512.5,328.9 513.5,351.2 514.5,343.0 515.5,347.9 516.5,350.6 517.5,349.8 518.5,349.3 519.5,350.1 520.5,348.9 521.5,350.1 522.5,350.5 523.5,348.8 524.5,348.2 525.5,348.8 526.5,348.6 527.5,335.7 528.5,323.3 529.5,332.3 530.5,351.5 531.5,344.0 532.5,344.6 533.5,345.2 534.5,348.8 535.5,349.0 536.5,347.2 537.5,333.7 538.5,322.0 539.5,349.8 540.5,349.7 541.5,343.2 542.5,350.0 543.5,350.3 544.5,350.1 545.5,345.5 546.5,349.8 547.5,349.5 548.5,350.0 549.5,345.9 550.5,348.4 551.5,348.4 552.5,343.1 553.5,350.8 554.5,348.5 555.5,338.9 556.5,323.4 557.5,349.3 558.5,350.3 559.5,347.3 560.5,345.5 561.5,346.8 562.5,350.3 563.5,351.0 564.5,349.8 565.5,349.5 566.5,347.0 567.5,321.7 568.5,349.0 569.5,349.1 570.5,348.4 571.5,349.4 572.5,350.3 573.5,346.9 574.5,344.0 575.5,352.8 576.5,349.0 577.5,318.2 578.5,348.8 579.5,348.7 580.5,348.0 581.5,345.2 582.5,348.9 583.5,347.2 584.5,347.8 585.5,348.7 586.5,347.9 587.5,347.9 588.5,317.9 589.5,349.0 590.5,348.2 591.5,350.5 592.5,349.9 593.5,349.3 594.5,346.2 595.5,346.1 596.5,349.5 597.5,350.6 598.5,350.2 599.5,322.4 600.5,350.2 601.5,350.5 602.5,351.2 603.5,346.4 604.5,344.3 605.5,351.0 606.5,350.8 607.5,349.4 608.5,348.8 609.5,334.4 610.5,322.5 611.5,336.5 612.5,348.8 613.5,343.4 614.5,348.5 615.5,349.2 616.5,348.8 617.5,345.1 618.5,349.2 619.5,349.4 620.5,318.7 621.5,350.8 622.5,350.6 623.5,350.4 624.5,344.7 625.5,349.1 626.5,349.8 627.5,347.6 628.5,348.8 629.5,349.4 630.5,348.3 631.5,323.8 632.5,326.0 633.5,347.8 634.5,348.4 635.5,348.0 636.5,343.8 637.5,349.0 638.5,347.0 639.5,349.3 640.5,350.3 641.5,350.1 642.5,323.0 643.5,333.7 644.5,351.6 645.5,351.6 646.5,346.7 647.5,350.7 648.5,343.3 649.5,350.5 650.5,350.7 651.5,350.7 652.5,317.9 653.5,349.6 654.5,349.4 655.5,349.4 656.5,350.3 657.5,344.0 658.5,346.6 659.5,344.9 660.5,348.9 661.5,348.6 662.5,348.9 663.5,320.0 664.5,349.5 665.5,349.5 666.5,350.1 667.5,343.9 668.5,352.4 669.5,349.6 670.5,349.0 671.5,345.5 672.5,348.7 673.5,348.6 674.5,323.9 675.5,334.9 676.5,350.5 677.5,350.6 678.5,350.2 679.5,349.3 680.5,345.9 681.5,351.5 682.5,346.5 683.5,350.0 684.5,323.4 685.5,326.6 686.5,347.9 687.5,349.0 688.5,348.4 689.5,345.6 690.5,346.3 691.5,348.6 692.5,343.7 693.5,348.9 694.5,350.2 695.5,320.5 696.5,351.1 697.5,350.3 698.5,350.0 699.5,343.2 700.5,350.5 701.5,344.4 702.5,350.6 703.5,350.6 704.5,350.3 705.5,350.4 706.5,322.1 707.5,331.3 708.5,349.4 709.5,349.6 710.5,349.4 711.5,347.6 712.5,350.6 713.5,345.5 714.5,349.1 715.5,349.8 716.5,349.7 717.5,350.8 718.5,350.9 719.5,351.3 720.5,349.3 721.5,348.8 722.5,349.2 723.5,349.6 724.5,349.4 725.5,317.8 726.5,323.1 727.5,350.5 728.5,349.0 729.5,347.4 730.5,349.2 731.5,348.3 732.5,346.9 733.5,350.1 734.5,339.0 735.5,317.9 736.5,326.1 737.5,349.6 738.5,349.4 739.5,343.4 740.5,349.5 741.5,343.7 742.5,349.9 743.5,348.9 744.5,349.6 745.5,322.2 746.5,348.6 747.5,347.9 748.5,348.9 749.5,344.6 750.5,348.3 751.5,348.0 752.5,349.1 753.5,348.0 754.5,334.7 755.5,318.5 756.5,349.6 757.5,350.7 758.5,350.0 759.5,351.3 760.5,350.1 761.5,348.0 762.5,350.3 763.5,343.1 764.5,349.0 765.5,321.7 766.5,332.5 767.5,348.4 768.5,349.5 769.5,345.0 770.5,349.5 771.5,349.3 772.5,343.0 773.5,350.0 774.5,349.8 775.5,348.3 776.5,349.5 777.5,347.9 778.5,349.1 779.5,349.0 780.5,351.0 781.5,349.5 782.5,351.8 783.5,349.7 784.5,333.3 785.5,321.6 786.5,348.8 787.5,348.1 788.5,346.0 789.5,345.2 790.5,348.8 791.5,348.8 792.5,349.2 793.5,349.9 794.5,350.2 795.5,348.9 796.5,318.3 797.5,349.5 798.5,348.5 799.5,348.4 800.5,350.0 801.5,350.8 802.5,346.1 803.5,350.8 804.5,351.2 805.5,350.3 806.5,349.7 807.5,319.1 808.5,321.4 809.5,349.5 810.5,343.1 811.5,350.3 812.5,350.4 813.5,350.2 814.5,351.1 815.5,349.5 816.5,346.6 817.5,334.6 818.5,319.9 819.5,339.7 820.5,349.5 821.5,349.6 822.5,348.9 823.5,350.4 824.5,346.3 825.5,347.6 826.5,350.8 827.5,350.7 828.5,323.5 829.5,338.6 830.5,350.3 831.5,349.2 832.5,348.8 833.5,343.6 834.5,344.3 835.5,350.4 836.5,351.0 837.5,339.7 838.5,323.7 839.5,327.2 840.5,350.2 841.5,349.7 842.5,345.3 843.5,350.8 844.5,349.2 845.5,344.2 846.5,349.1 847.5,349.9 848.5,338.8 849.5,322.5 850.5,333.1 851.5,349.8 852.5,349.5 853.5,349.9 854.5,343.1 855.5,349.5 856.5,348.5 857.5,343.7 858.5,350.5 859.5,335.5 860.5,321.8 861.5,339.6 862.5,348.0 863.5,348.7 864.5,348.5 865.5,345.2 866.5,344.3 867.5,349.2 868.5,350.0 869.5,348.7 870.5,349.6 871.5,318.6 872.5,348.0 873.5,349.3 874.5,346.8 875.5,350.3 876.5,351.2 877.5,349.8 878.5,344.4 879.5,349.2 880.5,350.6 881.5,319.7 882.5,334.5 883.5,350.3 884.5,349.1 885.5,348.9 886.5,347.5 887.5,349.8 888.5,349.7 889.5,344.3 890.5,348.7 891.5,350.0 892.5,317.7 893.5,334.8 894.5,349.2 895.5,349.6 896.5,350.5 897.5,349.5 898.5,350.4 899.5,345.9 900.5,344.8 901.5,351.2 902.5,335.4 903.5,320.0 904.5,350.6 905.5,350.8 906.5,349.9 907.5,351.1 908.5,352.0 909.5,343.1 910.5,349.1 911.5,349.1 912.5,348.2 913.5,348.0 914.5,322.3 915.5,349.7 916.5,348.6 917.5,347.9 918.5,353.2 919.5,350.3 920.5,351.2 921.5,343.4 922.5,350.7 923.5,339.8 924.5,318.4 925.5,348.8 926.5,350.3 927.5,347.2 928.5,349.9 929.5,347.3 930.5,349.3 931.5,349.9 932.5,350.1 933.5,349.2 934.5,348.2 935.5,323.7 936.5,336.6 937.5,350.7 938.5,347.9 939.5,349.4 940.5,350.2 941.5,348.9 942.5,349.3 943.5,350.0 944.5,350.7 945.5,351.4 946.5,321.5 947.5,342.7 948.5,350.9 949.5,346.8 950.5,351.1 951.5,350.4 952.5,351.1 953.5,344.0 954.5,350.9 955.5,333.3 956.5,321.8 957.5,350.3 958.5,350.5 959.5,351.2 960.5,346.5 961.5,345.7 962.5,349.6 963.5,350.4 964.5,350.7 965.5,351.3 966.5,333.5 967.5,319.3 968.5,337.1 969.5,350.7 970.5,349.1 971.5,348.3 972.5,350.0 973.5,346.7 974.5,343.5 975.5,348.8 976.5,349.1 977.5,346.9 978.5,318.8 979.5,352.6 980.5,351.2 981.5,351.0 982.5,344.2 983.5,350.3 984.5,349.2 985.5,346.0 986.5,348.2 987.5,349.7 988.5,321.7 989.5,333.2 990.5,350.1 991.5,349.9 992.5,350.6 993.5,346.7 994.5,347.8 995.5,350.1 996.5,350.0 997.5,349.6 998.5,318.8 999.5,348.4 1000.5,348.1 1001.5,348.9 1002.5,351.2 1003.5,346.0 1004.5,349.4 1005.5,346.9 1006.5,349.8 1007.5,348.7 1008.5,349.7 1009.5,320.6 1010.5,327.2 1011.5,348.8 1012.5,343.5 1013.5,347.5 1014.5,349.2 1015.5,349.8 1016.5,350.4 1017.5,349.9 1018.5,350.3 1019.5,338.8 1020.5,319.2 1021.5,350.2 1022.5,348.9 1023.5,350.4 1024.5,345.3 1025.5,351.3 1026.5,350.2 1027.5,346.2 1028.5,348.4 1029.5,348.3 1030.5,349.1 1031.5,350.2 1032.5,352.7 1033.5,350.0 1034.5,349.9 1035.5,348.7 1036.5,348.2 1037.5,339.3 1038.5,321.7 1039.5,331.0 1040.5,348.5 1041.5,349.1 1042.5,345.7 1043.5,349.7 1044.5,345.9 1045.5,348.7 1046.5,348.4 1047.5,322.8 1048.5,349.8 1049.5,349.4 1050.5,349.4 1051.5,349.2 1052.5,344.1 1053.5,348.2 1054.5,344.7 1055.5,349.7 1056.5,349.1 1057.5,321.5 1058.5,327.1 1059.5,349.7 1060.5,349.4 1061.5,349.1 1062.5,345.9 1063.5,348.2 1064.5,348.5 1065.5,343.4 1066.5,349.7 1067.5,349.8 1067.5,375.0M1074.5,375.0 1074.5,344.7 1075.5,346.1 1076.5,351.3 1077.5,351.5 1078.5,349.9 1079.5,322.7 1080.5,351.1 1081.5,350.3 1082.5,350.7 1083.5,350.2 1084.5,349.1 1085.5,349.8 1086.5,343.3 1087.5,351.1 1088.5,350.8 1089.5,349.3 1090.5,319.3 1091.5,350.7 1092.5,349.1 1093.5,346.4 1094.5,348.0 1095.5,348.8 1096.5,349.3 1097.5,349.9 1098.5,349.6 1099.5,350.6 1100.5,349.0 1101.5,319.6 1102.5,341.9 1103.5,347.5 1104.5,349.6 1105.5,346.6 1106.5,344.5 1107.5,350.2 1108.5,348.9 1109.5,348.5 1110.5,349.4 1111.5,348.4 1112.5,318.8 1113.5,349.4 1114.5,348.7 1115.5,348.0 1116.5,349.0 1117.5,345.5 1118.5,346.2 1119.5,349.1 1120.5,349.2 1121.5,350.2 1122.5,349.4 1123.5,317.5 1124.5,349.5 1125.5,349.3 1126.5,348.3 1127.5,348.0 1128.5,352.0 1129.5,346.8 1130.5,347.9 1131.5,350.8 1132.5,349.9 1133.5,337.2 1134.5,320.2 1135.5,325.4 1136.5,351.9 1137.5,350.1 1138.5,349.1 1139.5,346.8 1140.5,344.3 1141.5,349.8 1142.5,348.7 1143.5,348.3 1144.5,318.2 1145.5,350.4 1146.5,349.9 1147.5,344.8 1148.5,349.1 1149.5,346.0 1150.5,348.1 1151.5,349.1 1152.5,349.9 1153.5,349.8 1154.5,350.6 1155.5,321.7 1156.5,339.7 1157.5,348.5 1158.5,346.7 1159.5,343.9 1160.5,351.2 1161.5,348.6 1162.5,348.3 1163.5,349.9 1164.5,348.7 1165.5,339.8 1166.5,318.3 1167.5,330.2 1168.5,349.2 1169.5,345.9 1170.5,349.4 1171.5,349.8 1172.5,344.5 1173.5,348.7 1174.5,351.5 1175.5,349.2 1176.5,319.5 1177.5,342.8 1178.5,349.9 1179.5,349.7 1180.5,346.8 1181.5,349.0 1182.5,348.7 1183.5,347.8 1184.5,348.6 1185.5,348.7 1186.5,320.0 1187.5,351.0 1188.5,350.0 1189.5,350.5 1190.5,350.7 1191.5,346.4 1192.5,348.7 1193.5,349.0 1194.5,345.1 1195.5,348.2 1196.5,347.8 1197.5,349.3 1198.5,349.1 1199.5,349.8 1199.5,375.0M1207.5,375.0 1207.5,352.0 1208.5,352.0 1209.5,352.9 1210.5,351.1 1211.5,351.2 1212.5,351.6 1213.5,351.1 1214.5,351.3 1215.5,351.3 1216.5,354.7 1217.5,335.2 1218.5,324.1 1219.5,326.2 1220.5,351.9 1221.5,352.8 1222.5,344.8 1223.5,349.1 1224.5,351.6 1225.5,350.8 1226.5,351.2 1227.5,352.3 1228.5,323.0 1229.5,352.0 1230.5,351.7 1230.5,375.0M1239.5,375.0 1239.5,353.0 1240.5,325.0 1241.5,330.7 1242.5,352.0 1243.5,349.4 1244.5,352.3 1245.5,347.8 1246.5,353.5 1247.5,352.9 1248.5,351.7 1249.5,336.2 1250.5,323.2 1251.5,336.4 1252.5,351.7 1253.5,352.2 1254.5,350.7 1255.5,343.6 1256.5,344.8 1257.5,353.0 1258.5,352.3 1259.5,352.2 1260.5,351.3 1261.5,339.8 1262.5,321.8 1263.5,350.8 1264.5,352.5 1264.5,375.0M1272.5,375.0 1272.5,350.0 1273.5,350.0 1274.5,348.5 1275.5,349.9 1276.5,349.8 1277.5,333.0 1278.5,318.2 1279.5,329.5 1280.5,347.0 1281.5,348.7 1282.5,348.0 1283.5,347.9 1284.5,349.5 1285.5,343.1 1286.5,349.8 1287.5,350.0 1288.5,349.2 1289.5,321.8 1290.5,327.0 1291.5,351.0 1292.5,347.6 1293.5,349.4 1294.5,349.4 1295.5,350.0 1296.5,349.3 1297.5,350.0 1298.5,339.9 1299.5,321.9 1300.5,350.5 1301.5,350.9 1302.5,350.7 1303.5,346.5 1304.5,351.6 1305.5,345.3 1306.5,350.9 1307.5,350.1 1308.5,349.0 1309.5,350.0 1310.5,319.4 1311.5,340.9 1312.5,350.5 1313.5,346.1 1314.5,349.2 1315.5,347.4 1316.5,348.9 1317.5,349.8 1318.5,349.5 1319.5,334.0 1320.5,321.0 1321.5,332.2 1322.5,349.5 1323.5,349.1 1324.5,348.9 1325.5,343.8 1326.5,349.3 1327.5,345.9 1328.5,349.3 1329.5,333.7 1330.5,323.0 1331.5,335.2 1332.5,349.9 1333.5,349.9 1334.5,349.6 1335.5,345.0 1336.5,349.5 1337.5,350.1 1338.5,346.1 1339.5,349.7 1340.5,319.5 1341.5,349.3 1342.5,350.2 1343.5,349.7 1344.5,348.6 1345.5,346.3 1346.5,344.3 1347.5,349.6 1348.5,350.5 1349.5,349.0 1350.5,338.0 1351.5,321.1 1352.5,329.4 1353.5,349.2 1354.5,348.6 1355.5,349.5 1356.5,346.7 1357.5,350.8 1358.5,343.3 1359.5,349.8 1360.5,349.7 1361.5,347.9 1362.5,318.6 1363.5,336.9 1364.5,350.4 1365.5,349.0 1366.5,347.3 1367.5,348.4 1368.5,349.2 1369.5,347.9 1370.5,349.0 1371.5,349.3 1372.5,323.0 1373.5,333.7 1374.5,348.9 1375.5,349.7 1376.5,345.5 1377.5,348.1 1378.5,349.3 1379.5,349.8 1380.5,349.8 1381.5,352.0 1382.5,339.9 1383.5,323.7 1384.5,328.9 1385.5,349.5 1386.5,350.4 1387.5,351.0 1388.5,343.2 1389.5,351.2 1390.5,344.7 1391.5,350.4 1392.5,346.5 1393.5,350.3 1394.5,321.0 1395.5,342.1 1396.5,349.9 1397.5,345.8 1398.5,350.4 1399.5,349.0 1400.5,344.9 1401.5,349.8 1402.5,350.1 1403.5,350.6 1404.5,319.3 1405.5,342.3 1406.5,349.6 1407.5,347.7 1408.5,343.2 1409.5,349.7 1410.5,349.2 1411.5,350.5 1412.5,351.9 1413.5,349.6 1414.5,337.5 1415.5,321.9 1416.5,349.9 1417.5,350.0 1418.5,348.6 1419.5,347.6 1420.5,346.4 1421.5,349.4 1422.5,349.6 1423.5,349.9 1424.5,347.0 1425.5,350.3 1426.5,318.1 1427.5,349.2 1428.5,350.2 1429.5,345.2 1430.5,344.8 1431.5,349.2 1432.5,349.1 1433.5,349.2 1434.5,348.4 1435.5,349.8 1436.5,350.3 1437.5,318.3 1438.5,327.8 1439.5,350.3 1440.5,349.5 1441.5,346.6 1442.5,349.9 1443.5,350.0 1444.5,347.6 1445.5,348.0 1446.5,336.5 1447.5,319.4 1448.5,334.7 1449.5,346.4 1450.5,346.5 1451.5,349.0 1452.5,348.3 1453.5,349.2 1454.5,350.4 1455.5,347.9 1456.5,350.2 1457.5,349.4 1458.5,322.3 1459.5,337.6 1460.5,349.2 1461.5,348.5 1462.5,351.2 1463.5,345.0 1464.5,343.6 1465.5,348.5 1466.5,349.6 1467.5,349.7 1468.5,349.8 1469.5,323.0 1470.5,349.4 1471.5,348.7 1472.5,349.5 1473.5,346.0 1474.5,349.3 1475.5,345.2 1476.5,350.5 1477.5,350.0 1478.5,349.8 1479.5,349.2 1480.5,320.0 1481.5,350.6 1482.5,349.7 1483.5,344.1 1484.5,350.3 1485.5,349.6 1486.5,350.3 1487.5,347.7 1488.5,349.7 1489.5,349.2 1490.5,318.1 1491.5,349.3 1492.5,349.9 1493.5,350.9 1494.5,349.6 1495.5,348.9 1496.5,344.3 1497.5,344.7 1498.5,349.1 1499.5,349.3 1500.5,348.6 1501.5,323.3 1502.5,348.1 1503.5,349.5 1504.5,346.3 1505.5,350.8 1506.5,350.0 1507.5,348.8 1508.5,348.1 1509.5,347.7 1510.5,347.9 1511.5,321.0 1512.5,325.0 1513.5,350.6 1514.5,349.9 1515.5,350.7 1516.5,345.6 1517.5,349.0 1518.5,348.7 1519.5,345.5 1520.5,349.8 1521.5,349.6 1522.5,349.7 1523.5,321.7 1524.5,340.4 1525.5,348.9 1526.5,349.0 1527.5,351.0 1528.5,345.2 1529.5,343.7 1530.5,349.1 1531.5,349.4 1532.5,349.3 1533.5,323.7 1534.5,331.9 1535.5,347.5 1536.5,348.0 1537.5,344.1 1538.5,346.5 1539.5,348.4 1540.5,347.8 1541.5,349.5 1542.5,347.8 1543.5,338.0 1544.5,321.6 1545.5,325.9 1546.5,348.8 1547.5,348.1 1548.5,349.3 1549.5,348.7 1550.5,351.4 1551.5,346.5 1552.5,350.5 1553.5,350.1 1554.5,347.4 1555.5,350.4 1556.5,350.6 1557.5,347.5 1558.5,348.9 1559.5,351.0 1560.5,348.4 1561.5,349.2 1562.5,350.3 1563.5,318.4 1564.5,339.8 1565.5,349.7 1566.5,350.2 1567.5,346.5 1568.5,348.1 1569.5,345.7 1570.5,349.3 1571.5,349.5 1572.5,347.3 1573.5,321.8 1574.5,350.0 1575.5,349.5 1576.5,350.0 1577.5,350.1 1578.5,348.6 1579.5,345.6 1580.5,349.8 1581.5,344.5 1582.5,351.3 1583.5,350.7 1584.5,350.5 1585.5,322.0 1586.5,327.1 1587.5,350.8 1588.5,348.0 1589.5,349.3 1590.5,349.0 1591.5,351.3 1592.5,346.5 1593.5,347.8 1594.5,345.1 1595.5,319.4 1596.5,349.0 1597.5,352.4 1598.5,348.8 1599.5,346.2 1600.5,348.6 1601.5,346.7 1602.5,349.9 1603.5,349.2 1604.5,349.1 1605.5,322.1 1606.5,333.6 1607.5,348.2 1608.5,348.0 1609.5,349.3 1610.5,349.0 1611.5,350.4 1612.5,347.9 1613.5,350.7 1614.5,349.1 1615.5,350.0 1616.5,321.7 1617.5,350.5 1618.5,350.4 1619.5,350.1 1620.5,349.9 1621.5,349.0 1622.5,345.3 1623.5,345.0 1624.5,348.8 1625.5,348.9 1626.5,350.2 1627.5,350.1 1628.5,350.6 1629.5,349.1 1630.5,349.4 1631.5,349.9 1632.5,348.6 1633.5,349.2 1634.5,350.2 1635.5,323.3 1636.5,326.9 1637.5,346.7 1638.5,350.1 1639.5,346.8 1640.5,348.8 1641.5,345.5 1642.5,348.2 1643.5,347.9 1644.5,347.9 1645.5,349.9 1646.5,322.0 1647.5,326.3 1648.5,350.5 1649.5,349.8 1650.5,349.8 1651.5,350.9 1652.5,344.5 1653.5,343.1 1654.5,347.2 1655.5,349.0 1656.5,350.2 1657.5,319.5 1658.5,348.7 1659.5,348.1 1660.5,348.8 1661.5,348.0 1662.5,348.2 1663.5,343.2 1664.5,348.4 1665.5,343.2 1666.5,349.7 1667.5,349.4 1668.5,320.2 1669.5,339.2 1670.5,350.2 1671.5,350.7 1672.5,344.8 1673.5,348.5 1674.5,345.3 1675.5,348.3 1676.5,345.2 1677.5,349.4 1678.5,350.5 1679.5,320.8 1680.5,349.6 1681.5,349.9 1682.5,348.6 1683.5,348.7 1684.5,348.7 1685.5,345.4 1686.5,343.1 1687.5,349.8 1688.5,348.4 1689.5,349.7 1690.5,322.2 1691.5,339.2 1692.5,350.2 1693.5,349.6 1694.5,343.9 1695.5,343.6 1696.5,347.1 1697.5,348.3 1698.5,351.6 1699.5,349.2 1700.5,349.6 1701.5,349.9 1702.5,349.5 1703.5,350.3 1704.5,349.9 1705.5,350.3 1706.5,349.9 1707.5,349.8 1708.5,322.6 1709.5,349.5 1710.5,348.6 1711.5,347.9 1712.5,345.6 1713.5,345.0 1714.5,346.7 1715.5,348.5 1716.5,350.4 1717.5,349.4 1718.5,338.0 1719.5,322.7 1720.5,337.1 1721.5,350.2 1722.5,348.9 1723.5,344.5 1724.5,348.5 1725.5,349.3 1726.5,345.5 1727.5,348.2 1728.5,349.1 1729.5,349.9 1730.5,320.9 1731.5,348.1 1732.5,349.9 1733.5,348.7 1734.5,344.2 1735.5,350.2 1736.5,350.8 1737.5,345.0 1738.5,350.1 1739.5,349.5 1740.5,322.8 1741.5,328.7 1742.5,351.6 1743.5,346.0 1744.5,350.6 1745.5,350.9 1746.5,351.0 1747.5,350.6 1748.5,347.6 1749.5,348.0 1750.5,322.0 1751.5,348.3 1752.5,348.3 1753.5,348.1 1754.5,348.1 1755.5,348.6 1756.5,345.0 1757.5,346.4 1758.5,349.5 1759.5,348.4 1760.5,322.1 1761.5,335.8 1762.5,348.1 1763.5,348.3 1764.5,349.5 1765.5,345.4 1766.5,344.9 1767.5,345.5 1768.5,348.1 1769.5,349.5 1770.5,336.3 1771.5,320.7 1772.5,341.5 1773.5,348.5 1774.5,348.0 1775.5,349.8 1776.5,345.7 1777.5,349.6 1778.5,350.4 1779.5,345.6 1780.5,349.9 1781.5,348.1 1782.5,323.2 1783.5,347.9 1784.5,347.5 1785.5,347.6 1786.5,347.7 1787.5,348.3 1788.5,348.7 1789.5,348.1 1790.5,348.1 1791.5,348.8 1792.5,349.8 1793.5,318.8 1794.5,329.1 1795.5,350.2 1796.5,348.9 1797.5,348.4 1798.5,348.2 1799.5,345.4 1800.5,349.9 1801.5,348.8 1802.5,348.0 1803.5,348.9 1804.5,318.0 1805.5,350.2 1806.5,349.4 1807.5,348.4 1808.5,349.5 1809.5,347.4 1810.5,348.7 1811.5,346.8 1812.5,349.1 1813.5,351.3 1814.5,351.0 1815.5,353.0 1816.5,348.9 1817.5,350.4 1818.5,348.9 1819.5,350.0 1820.5,337.2 1821.5,322.0 1822.5,333.2 1823.5,349.1 1824.5,350.5 1825.5,349.3 1826.5,345.8 1827.5,350.5 1828.5,350.5 1829.5,350.2 1830.5,350.1 1831.5,336.9 1832.5,320.1 1833.5,331.7 1834.5,350.1 1835.5,349.6 1836.5,346.4 1837.5,351.1 1838.5,349.9 1839.5,347.4 1840.5,349.1 1841.5,338.1 1842.5,318.8 1843.5,322.3 1844.5,349.9 1845.5,350.0 1846.5,349.8 1847.5,353.8 1848.5,345.8 1849.5,343.5 1850.5,348.7 1851.5,349.8 1852.5,321.8 1853.5,347.5 1854.5,348.9 1855.5,345.6 1856.5,344.5 1857.5,345.6 1858.5,349.8 1859.5,349.5 1860.5,349.6 1861.5,350.5 1862.5,335.4 1863.5,321.0 1864.5,349.9 1865.5,349.7 1866.5,349.2 1867.5,347.2 1868.5,343.6 1869.5,347.9 1870.5,350.4 1871.5,347.9 1872.5,349.4 1873.5,350.4 1874.5,323.9 1875.5,334.5 1876.5,349.5 1877.5,348.7 1878.5,349.3 1879.5,350.5 1880.5,347.1 1881.5,349.3 1882.5,350.4 1883.5,350.5 1884.5,349.0 1885.5,322.8 1886.5,341.6 1887.5,348.7 1888.5,348.2 1889.5,348.3 1890.5,349.2 1891.5,345.1 1892.5,345.6 1893.5,349.6 1894.5,352.0 1895.5,322.7 1896.5,333.6 1897.5,349.4 1898.5,344.9 1899.5,350.0 1900.5,350.5 1901.5,345.0 1902.5,349.7 1903.5,350.4 1904.5,350.8 1905.5,333.0 1906.5,321.1 1907.5,348.8 1908.5,348.5 1909.5,348.1 1910.5,349.0 1911.5,350.4 1912.5,345.8 1913.5,343.3 1914.5,348.8 1915.5,352.0 1916.5,333.2 1917.5,319.4 1918.5,337.2 1919.5,350.1 1920.5,345.5 1921.5,348.6 1922.5,347.2 1923.5,348.2 1924.5,344.1 1925.5,350.1 1926.5,349.5 1927.5,339.0 1928.5,322.8 1929.5,342.3 1930.5,352.1 1931.5,350.2 1932.5,348.7 1933.5,347.1 1934.5,345.7 1935.5,350.2 1936.5,350.5 1937.5,349.9 1938.5,349.9 1939.5,322.8 1940.5,349.1 1941.5,350.3 1942.5,347.9 1943.5,349.5 1944.5,352.4 1945.5,350.4 1946.5,346.5 1947.5,350.0 1948.5,349.1 1949.5,323.9 1950.5,341.2 1951.5,348.8 1952.5,350.0 1953.5,350.1 1954.5,349.1 1955.5,350.0 1956.5,344.9 1957.5,350.8 1958.5,350.5 1959.5,349.9 1960.5,320.1 1961.5,337.3 1962.5,349.6 1963.5,348.9 1964.5,349.0 1965.5,345.6 1966.5,343.7 1967.5,349.0 1968.5,350.3 1969.5,349.1 1970.5,350.4 1971.5,321.5 1972.5,335.2 1973.5,349.3 1974.5,350.4 1975.5,343.5 1976.5,346.4 1977.5,350.8 1978.5,350.5 1979.5,351.2 1980.5,351.6 1981.5,336.2 1982.5,320.1 1983.5,323.0 1984.5,348.8 1985.5,349.5 1986.5,343.4 1987.5,347.9 1988.5,350.1 1989.5,350.8 1990.5,350.6 1991.5,349.5 1992.5,320.2 1993.5,325.2 1994.5,349.4 1995.5,351.1 1996.5,348.4 1997.5,348.2 1998.5,344.5 1999.5,344.5 2000.5,347.6 2001.5,348.3 2002.5,348.9 2003.5,321.8 2004.5,338.9 2005.5,349.2 2006.5,351.3 2007.5,348.2 2008.5,348.8 2009.5,343.2 2010.5,343.2 2011.5,349.5 2012.5,338.2 2013.5,322.9 2014.5,329.6 2015.5,350.2 2016.5,349.3 2017.5,346.9 2018.5,348.6 2019.5,348.8 2020.5,347.4 2021.5,349.4 2022.5,348.7 2023.5,335.0 2024.5,317.5 2025.5,348.8 2026.5,350.2 2027.5,343.3 2028.5,350.2 2029.5,349.8 2030.5,344.4 2031.5,348.1 2032.5,347.5 2033.5,349.5 2034.5,319.4 2035.5,334.9 2036.5,349.5 2037.5,350.7 2038.5,352.6 2039.5,345.8 2040.5,349.6 2041.5,350.3 2042.5,350.3 2043.5,349.6 2044.5,350.7 2045.5,349.6 2046.5,349.7 2047.5,348.6 2048.5,348.9 2049.5,348.5 2050.5,350.1 2051.5,319.8 2052.5,332.1 2053.5,348.2 2054.5,348.3 2055.5,343.1 2056.5,350.5 2057.5,350.4 2058.5,346.1 2059.5,349.8 2060.5,350.1 2061.5,348.1 2062.5,322.3 2063.5,337.8 2064.5,348.6 2065.5,344.9 2066.5,349.2 2067.5,349.2 2068.5,347.1 2069.5,348.3 2070.5,350.2 2071.5,349.2 2072.5,339.7 2073.5,322.5 2074.5,325.7 2075.5,350.0 2076.5,350.4 2077.5,346.6 2078.5,343.0 2079.5,349.5 2080.5,345.6 2081.5,347.8 2082.5,333.5 2083.5,323.0 2084.5,350.5 2085.5,350.9 2086.5,350.8 2087.5,349.3 2088.5,349.9 2089.5,343.8 2090.5,344.9 2091.5,344.1 2092.5,348.0 2093.5,349.2 2094.5,322.0 2095.5,326.1 2096.5,348.1 2097.5,348.6 2098.5,347.6 2099.5,343.4 2100.5,348.1 2101.5,346.6 2102.5,349.0 2103.5,347.4 2104.5,349.8 2105.5,349.0 2106.5,349.1 2107.5,349.2 2108.5,349.8 2109.5,350.1 2110.5,349.1 2111.5,349.6 2112.5,348.9 2113.5,334.4 2114.5,318.1 2115.5,350.3 2116.5,350.9 2117.5,350.2 2118.5,346.1 2119.5,348.6 2120.5,349.6 2121.5,345.8 2122.5,347.7 2123.5,336.3 2124.5,322.3 2125.5,341.9 2126.5,347.6 2127.5,349.6 2128.5,348.8 2129.5,347.4 2130.5,346.6 2131.5,348.8 2132.5,345.0 2133.5,350.7 2134.5,322.5 2135.5,326.7 2136.5,350.4 2137.5,349.1 2138.5,344.9 2139.5,351.2 2140.5,349.5 2141.5,347.9 2142.5,348.8 2143.5,349.9 2144.5,348.9 2145.5,335.3 2146.5,320.6 2147.5,348.6 2148.5,349.9 2149.5,349.8 2150.5,346.9 2151.5,350.1 2152.5,343.7 2153.5,351.2 2154.5,349.4 2155.5,349.8 2156.5,323.6 2157.5,349.5 2158.5,350.6 2159.5,350.2 2160.5,343.1 2161.5,350.3 2162.5,351.0 2163.5,347.8 2164.5,334.8 2165.5,320.9 2166.5,350.0 2167.5,350.3 2168.5,348.8 2169.5,347.5 2170.5,349.2 2171.5,350.8 2172.5,345.2 2173.5,345.1 2174.5,351.7 2175.5,350.2 2176.5,318.9 2177.5,325.6 2178.5,349.7 2179.5,350.0 2180.5,348.6 2181.5,345.5 2182.5,349.2 2183.5,349.4 2184.5,349.6 2185.5,349.2 2186.5,320.1 2187.5,348.9 2188.5,350.4 2189.5,350.2 2190.5,350.7 2191.5,346.7 2192.5,350.6 2193.5,346.2 2194.5,349.1 2195.5,349.3 2196.5,339.9 2197.5,321.7 2198.5,333.8 2199.5,347.0 2200.5,348.5 2201.5,345.7 2202.5,343.6 2203.5,349.1 2204.5,348.5 2205.5,344.9 2206.5,348.5 2207.5,322.6 2208.5,341.2 2209.5,348.1 2210.5,349.3 2211.5,348.6 2212.5,344.7 2213.5,347.3 2214.5,348.5 2215.5,349.9 2216.5,349.5 2217.5,339.3 2218.5,323.2 2219.5,339.0 2220.5,350.1 2221.5,350.4 2222.5,350.7 2223.5,343.1 2224.5,350.1 2225.5,343.9 2226.5,350.5 2227.5,334.7 2228.5,323.9 2229.5,329.5 2230.5,349.2 2231.5,350.2 2232.5,343.8 2233.5,348.5 2234.5,350.2 2235.5,350.8 2236.5,350.2 2237.5,348.5 2238.5,348.0 2239.5,318.7 2240.5,325.7 2241.5,348.7 2242.5,344.8 2243.5,349.8 2244.5,349.7 2245.5,350.6 2246.5,349.4 2247.5,344.9 2248.5,335.7 2249.5,323.8 2250.5,333.5 2251.5,347.9 2252.5,349.2 2253.5,344.1 2254.5,349.9 2255.5,350.2 2256.5,345.8 2257.5,351.3 2258.5,349.9 2259.5,350.8 2260.5,348.2 2261.5,347.9 2262.5,348.2 2263.5,348.3 2264.5,348.8 2265.5,349.6 2266.5,350.4 2267.5,319.8 2268.5,340.3 2269.5,351.3 2270.5,346.9 2271.5,351.0 2272.5,350.9 2273.5,344.3 2274.5,350.4 2275.5,352.4 2276.5,335.1 2277.5,322.6 2278.5,328.7 2279.5,349.7 2280.5,350.6 2281.5,350.4 2282.5,345.5 2283.5,343.1 2284.5,350.1 2285.5,349.8 2286.5,349.6 2287.5,348.8 2288.5,319.7 2289.5,348.7 2290.5,349.4 2291.5,351.0 2292.5,349.0 2293.5,345.1 2294.5,346.7 2295.5,348.8 2296.5,347.1 2297.5,349.4 2298.5,337.7 2299.5,320.2 2300.5,325.6 2301.5,349.7 2302.5,348.8 2303.5,348.3 2304.5,347.3 2305.5,349.0 2306.5,344.6 2307.5,348.6 2308.5,349.0 2309.5,348.2 2310.5,323.2 2311.5,348.3 2312.5,349.2 2313.5,343.6 2314.5,347.9 2315.5,344.6 2316.5,348.8 2317.5,348.3 2318.5,348.3 2319.5,346.9 2320.5,318.0 2321.5,322.8 2322.5,348.5 2323.5,348.1 2324.5,348.4 2325.5,344.4 2326.5,348.4 2327.5,347.3 2328.5,350.2 2329.5,350.2 2330.5,336.7 2331.5,317.6 2332.5,319.7 2333.5,350.7 2334.5,350.9 2335.5,349.6 2336.5,348.6 2337.5,349.2 2338.5,344.8 2339.5,348.7 2340.5,348.2 2341.5,322.8 2342.5,326.8 2343.5,350.5 2344.5,343.8 2345.5,347.7 2346.5,350.7 2347.5,349.3 2348.5,345.9 2349.5,350.2 2350.5,351.3 2351.5,322.1 2352.5,349.5 2353.5,348.8 2354.5,350.7 2355.5,350.4 2356.5,351.2 2357.5,343.5 2358.5,349.9 2359.5,347.9 2360.5,347.9 2361.5,347.7 2362.5,323.0 2363.5,338.7 2364.5,348.6 2365.5,346.1 2366.5,348.5 2367.5,349.4 2368.5,346.6 2369.5,349.3 2370.5,348.5 2371.5,337.5 2372.5,317.7 2373.5,323.4 2374.5,349.2 2375.5,347.0 2376.5,349.9 2377.5,349.8 2378.5,344.5 2379.5,344.2 2380.5,349.3 2381.5,348.8 2382.5,338.8 2383.5,320.4 2384.5,338.2 2385.5,349.3M1207.5,352V167M1208.5,279V352M1271.5,369V62M1272.5,75V350"/>
<polyline fill="none" stroke="#00f0f0" stroke-width="1.1" stroke-linejoin="round" points="97.5,504.5 97.5,454.5 1066.5,454.5 1066.5,504.5 1067.5,505.5 1067.5,547.5 1073.5,547.5 1073.5,454.5 1199.5,454.5 1199.5,547.5 1207.5,547.5 1207.5,454.5 1230.5,454.5 1230.5,470.5 1231.5,471.5 1231.5,547.5 1236.5,547.5 1236.5,502.5 1237.5,501.5 1237.5,454.5 1264.5,454.5 1264.5,540.5 1265.5,547.5 1271.5,547.5 1271.5,471.5 1272.5,470.5 1272.5,454.5 2385.0,454.5"/>
<text x="1251.5" y="55" font-family="Liberation Sans, sans-serif" font-size="28" fill="#9a9a9a" text-anchor="middle">Isense1</text>
<text x="1240.5" y="435.4" font-family="Liberation Sans, sans-serif" font-size="28" fill="#9a9a9a" text-anchor="middle">Range</text>
<text x="341.7" y="395.3" font-family="Liberation Sans, sans-serif" font-size="24" fill="#9a9a9a" text-anchor="middle">15000</text>
<text x="663.7" y="395.3" font-family="Liberation Sans, sans-serif" font-size="24" fill="#9a9a9a" text-anchor="middle">15500</text>
<text x="985.7" y="395.3" font-family="Liberation Sans, sans-serif" font-size="24" fill="#9a9a9a" text-anchor="middle">16000</text>
<text x="1307.7" y="395.3" font-family="Liberation Sans, sans-serif" font-size="24" fill="#9a9a9a" text-anchor="middle">16500</text>
<text x="1629.8" y="395.3" font-family="Liberation Sans, sans-serif" font-size="24" fill="#9a9a9a" text-anchor="middle">17000</text>
<text x="1951.8" y="395.3" font-family="Liberation Sans, sans-serif" font-size="24" fill="#9a9a9a" text-anchor="middle">17500</text>
<text x="2273.8" y="395.3" font-family="Liberation Sans, sans-serif" font-size="24" fill="#9a9a9a" text-anchor="middle">18000</text>
<text x="118.3" y="171.6" font-family="Liberation Sans, sans-serif" font-size="24" fill="#9a9a9a" text-anchor="end">1.0</text>
<text x="118.3" y="264.9" font-family="Liberation Sans, sans-serif" font-size="24" fill="#9a9a9a" text-anchor="end">0.5</text>
<text x="118.3" y="358.3" font-family="Liberation Sans, sans-serif" font-size="24" fill="#9a9a9a" text-anchor="end">0</text>
<text x="92.3" y="464.4" font-family="Liberation Sans, sans-serif" font-size="24" fill="#9a9a9a" text-anchor="end">4</text>
<text x="92.3" y="556.5" font-family="Liberation Sans, sans-serif" font-size="24" fill="#9a9a9a" text-anchor="end">3</text>
<path d="M864.5 568 V571.5 H983.5 V568" fill="#fff" stroke="#b0bec5" stroke-width="1"/>
<path d="M999.5 568 V571.5 H1118.5 V568" fill="#fff" stroke="#b0bec5" stroke-width="1"/>
<path d="M1134.5 568 V571.5 H1253.5 V568" fill="#fff" stroke="#b0bec5" stroke-width="1"/>
<path d="M1269.5 568 V571.5 H1388.5 V568" fill="#fff" stroke="#b0bec5" stroke-width="1"/>
<path d="M1404.5 568 V571.5 H1523.5 V568" fill="#fff" stroke="#b0bec5" stroke-width="1"/>
<path d="M1539.5 568 V571.5 H1658.5 V568" fill="#fff" stroke="#b0bec5" stroke-width="1"/>
<defs><radialGradient id="sh"><stop offset="0" stop-color="#000" stop-opacity="0.07"/><stop offset="1" stop-color="#000" stop-opacity="0"/></radialGradient></defs>
<ellipse cx="269" cy="571" rx="17" ry="5.5" fill="url(#sh)"/>
<line x1="95" x2="2388" y1="979.7" y2="979.7" stroke="#e0e0e0" stroke-width="2"/>
<text x="89" y="986.0" font-family="Liberation Sans, sans-serif" font-size="22" fill="#666666" text-anchor="end">0 nA</text>
<line x1="95" x2="2388" y1="907.7" y2="907.7" stroke="#e0e0e0" stroke-width="2"/>
<text x="89" y="914.0" font-family="Liberation Sans, sans-serif" font-size="22" fill="#666666" text-anchor="end">200 nA</text>
<line x1="95" x2="2388" y1="835.7" y2="835.7" stroke="#e0e0e0" stroke-width="2"/>
<text x="89" y="842.0" font-family="Liberation Sans, sans-serif" font-size="22" fill="#666666" text-anchor="end">400 nA</text>
<line x1="95" x2="2388" y1="763.7" y2="763.7" stroke="#e0e0e0" stroke-width="2"/>
<text x="89" y="770.0" font-family="Liberation Sans, sans-serif" font-size="22" fill="#666666" text-anchor="end">600 nA</text>
<line x1="95" x2="2388" y1="691.7" y2="691.7" stroke="#e0e0e0" stroke-width="2"/>
<text x="89" y="698.0" font-family="Liberation Sans, sans-serif" font-size="22" fill="#666666" text-anchor="end">800 nA</text>
<line x1="95" x2="2388" y1="619.8" y2="619.8" stroke="#e0e0e0" stroke-width="2"/>
<text x="89" y="626.0" font-family="Liberation Sans, sans-serif" font-size="22" fill="#666666" text-anchor="end">1000 nA</text>
<line x1="646" x2="646" y1="619" y2="995" stroke="#e0e0e0" stroke-width="2"/>
<line x1="1293" x2="1293" y1="619" y2="995" stroke="#e0e0e0" stroke-width="2"/>
<line x1="1940" x2="1940" y1="619" y2="995" stroke="#e0e0e0" stroke-width="2"/>
<line x1="110" x2="110" y1="619" y2="995" stroke="#d0d0d0" stroke-width="2"/>
<line x1="2388" x2="2388" y1="619" y2="995" stroke="#e0e0e0" stroke-width="2"/>
<text x="110" y="1019.2" font-family="Liberation Sans, sans-serif" font-size="22" fill="#555555" text-anchor="middle">00:00:25</text>
<text x="646" y="1019.2" font-family="Liberation Sans, sans-serif" font-size="22" fill="#555555" text-anchor="middle">00:00:25</text>
<text x="1293" y="1019.2" font-family="Liberation Sans, sans-serif" font-size="22" fill="#555555" text-anchor="middle">00:00:25</text>
<text x="1940" y="1019.2" font-family="Liberation Sans, sans-serif" font-size="22" fill="#555555" text-anchor="middle">00:00:25</text>
<text x="2388" y="1019.2" font-family="Liberation Sans, sans-serif" font-size="22" fill="#555555" text-anchor="middle">00:00:25</text>
<line x1="110.5" x2="110.5" y1="587" y2="616" stroke="#cfd8dc" stroke-width="1"/>
<line x1="2389.5" x2="2389.5" y1="587" y2="616" stroke="#cfd8dc" stroke-width="1"/>
<line x1="110" x2="1188" y1="602.5" y2="602.5" stroke="#cfd8dc" stroke-width="1.3"/>
<line x1="1311" x2="2389" y1="602.5" y2="602.5" stroke="#cfd8dc" stroke-width="1.3"/>
<text x="1249.5" y="609" font-family="Liberation Sans, sans-serif" font-size="20" fill="#455a64" text-anchor="middle">Δ35.20ms</text>
<path fill="none" stroke="#00a9cc" stroke-width="2" stroke-linejoin="miter" d="M110,980.0 L110.7,980.0 L110.7,885.0 L112.9,980.0 L113.9,980.0 L113.9,900.5 L116.1,980.0 L115.0,980.0 L115.0,900.5 L117.2,980.0 L116.1,980.0 L116.1,885.0 L118.3,980.0 L120.0,980.0 L120.0,900.5 L122.2,980.0 L126.0,980.0 L126.0,900.5 L128.2,980.0 L129.7,980.0 L129.7,885.0 L131.9,980.0 L135.7,980.0 L135.7,869.2 L137.9,980.0 L138.1,980.0 L138.1,885.0 L140.3,980.0 L145.0,980.0 L145.0,900.5 L147.2,980.0 L147.5,980.0 L147.5,900.5 L149.7,980.0 L151.0,980.0 L151.0,869.2 L153.2,980.0 L157.1,980.0 L157.1,900.5 L159.3,980.0 L165.0,980.0 L165.0,885.0 L167.2,980.0 L172.0,980.0 L172.0,900.5 L174.2,980.0 L174.2,980.0 L174.2,885.0 L176.4,980.0 L175.7,980.0 L175.7,900.5 L177.9,980.0 L180.2,980.0 L180.2,900.5 L182.4,980.0 L187.8,980.0 L187.8,885.0 L190.0,980.0 L193.8,980.0 L193.8,900.5 L196.0,980.0 L203.5,980.0 L203.5,885.0 L205.7,980.0 L219.2,980.0 L219.2,900.5 L221.4,980.0 L221.0,980.0 L221.0,900.5 L223.2,980.0 L222.9,980.0 L222.9,869.2 L225.1,980.0 L227.0,980.0 L227.0,900.5 L229.2,980.0 L229.2,980.0 L229.2,900.5 L231.4,980.0 L238.3,980.0 L238.3,869.2 L240.5,980.0 L240.6,980.0 L240.6,900.5 L242.8,980.0 L246.0,980.0 L246.0,885.0 L248.2,980.0 L259.9,980.0 L259.9,885.0 L262.1,980.0 L267.5,980.0 L267.5,869.2 L269.7,980.0 L270.0,980.0 L270.0,900.5 L272.2,980.0 L273.2,980.0 L273.2,900.5 L275.4,980.0 L275.2,980.0 L275.2,869.2 L277.4,980.0 L283.0,980.0 L283.0,869.2 L285.2,980.0 L288.4,980.0 L288.4,869.2 L290.6,980.0 L291.3,980.0 L291.3,869.2 L293.5,980.0 L294.9,980.0 L294.9,900.5 L297.1,980.0 L304.3,980.0 L304.3,900.5 L306.5,980.0 L306.0,980.0 L306.0,869.2 L308.2,980.0 L322.2,980.0 L322.2,900.5 L324.4,980.0 L323.6,980.0 L323.6,900.5 L325.8,980.0 L327.7,980.0 L327.7,869.2 L329.9,980.0 L333.7,980.0 L333.7,900.5 L335.9,980.0 L341.1,980.0 L341.1,869.2 L343.3,980.0 L345.1,980.0 L345.1,900.5 L347.3,980.0 L347.3,980.0 L347.3,900.5 L349.5,980.0 L349.0,980.0 L349.0,869.2 L351.2,980.0 L354.9,980.0 L354.9,853.7 L357.1,980.0 L356.9,980.0 L356.9,869.2 L359.1,980.0 L364.5,980.0 L364.5,900.5 L366.7,980.0 L370.2,980.0 L370.2,885.0 L372.4,980.0 L375.9,980.0 L375.9,900.5 L378.1,980.0 L378.1,980.0 L378.1,869.2 L380.3,980.0 L379.5,980.0 L379.5,900.5 L381.7,980.0 L383.8,980.0 L383.8,869.2 L386.0,980.0 L385.7,980.0 L385.7,885.0 L387.9,980.0 L387.4,980.0 L387.4,900.5 L389.6,980.0 L393.8,980.0 L393.8,900.5 L396.0,980.0 L398.1,980.0 L398.1,900.5 L400.3,980.0 L399.6,980.0 L399.6,869.2 L401.8,980.0 L401.7,980.0 L401.7,869.2 L403.9,980.0 L406.0,980.0 L406.0,900.5 L408.2,980.0 L407.4,980.0 L407.4,869.2 L409.6,980.0 L408.9,980.0 L408.9,900.5 L411.1,980.0 L413.2,980.0 L413.2,900.5 L415.4,980.0 L422.9,980.0 L422.9,869.2 L425.1,980.0 L438.3,980.0 L438.3,900.5 L440.5,980.0 L440.5,980.0 L440.5,900.5 L442.7,980.0 L442.5,980.0 L442.5,900.5 L444.7,980.0 L444.0,980.0 L444.0,885.0 L446.2,980.0 L446.1,980.0 L446.1,900.5 L448.3,980.0 L461.6,980.0 L461.6,900.5 L463.8,980.0 L465.5,980.0 L465.5,869.2 L467.7,980.0 L481.0,980.0 L481.0,869.2 L483.2,980.0 L488.8,980.0 L488.8,900.5 L491.0,980.0 L492.7,980.0 L492.7,900.5 L494.9,980.0 L494.8,980.0 L494.8,806.2 L497.0,980.0 L499.1,980.0 L499.1,869.2 L501.3,980.0 L500.6,980.0 L500.6,869.2 L502.8,980.0 L502.3,980.0 L502.3,900.5 L504.5,980.0 L508.5,980.0 L508.5,900.5 L510.7,980.0 L509.9,980.0 L509.9,885.0 L512.1,980.0 L531.4,980.0 L531.4,900.5 L533.6,980.0 L533.5,980.0 L533.5,900.5 L535.7,980.0 L539.3,980.0 L539.3,869.2 L541.5,980.0 L545.0,980.0 L545.0,900.5 L547.2,980.0 L547.1,980.0 L547.1,900.5 L549.3,980.0 L550.7,980.0 L550.7,900.5 L552.9,980.0 L568.3,980.0 L568.3,900.5 L570.5,980.0 L576.2,980.0 L576.2,900.5 L578.4,980.0 L581.9,980.0 L581.9,885.0 L584.1,980.0 L589.4,980.0 L589.4,900.5 L591.6,980.0 L593.7,980.0 L593.7,900.5 L595.9,980.0 L597.7,980.0 L597.7,885.0 L599.9,980.0 L603.3,980.0 L603.3,869.2 L605.5,980.0 L605.9,980.0 L605.9,900.5 L608.1,980.0 L610.9,980.0 L610.9,900.5 L613.1,980.0 L614.8,980.0 L614.8,900.5 L617.0,980.0 L618.8,980.0 L618.8,885.0 L621.0,980.0 L620.9,980.0 L620.9,885.0 L623.1,980.0 L626.9,980.0 L626.9,900.5 L629.1,980.0 L634.5,980.0 L634.5,885.0 L636.7,980.0 L643.8,980.0 L643.8,900.5 L646.0,980.0 L648.1,980.0 L648.1,869.2 L650.3,980.0 L655.7,980.0 L655.7,885.0 L657.9,980.0 L657.9,980.0 L657.9,853.7 L660.1,980.0 L669.4,980.0 L669.4,900.5 L671.6,980.0 L671.1,980.0 L671.1,900.5 L673.3,980.0 L676.8,980.0 L676.8,885.0 L679.0,980.0 L679.0,980.0 L679.0,900.5 L681.2,980.0 L685.1,980.0 L685.1,900.5 L687.3,980.0 L686.8,980.0 L686.8,900.5 L689.0,980.0 L692.7,980.0 L692.7,900.5 L694.9,980.0 L702.3,980.0 L702.3,885.0 L704.5,980.0 L706.3,980.0 L706.3,900.5 L708.5,980.0 L708.3,980.0 L708.3,900.5 L710.5,980.0 L715.9,980.0 L715.9,900.5 L718.1,980.0 L719.5,980.0 L719.5,885.0 L721.7,980.0 L722.1,980.0 L722.1,837.5 L724.3,980.0 L725.7,980.0 L725.7,900.5 L727.9,980.0 L787.6,980.0 L787.6,885.0 L789.8,980.0 L789.7,980.0 L789.7,900.5 L791.9,980.0 L797.6,980.0 L797.6,900.5 L799.8,980.0 L803.0,980.0 L803.0,900.5 L805.2,980.0 L806.9,980.0 L806.9,900.5 L809.1,980.0 L809.0,980.0 L809.0,869.2 L811.2,980.0 L812.9,980.0 L812.9,885.0 L815.1,980.0 L818.8,980.0 L818.8,900.5 L821.0,980.0 L822.6,980.0 L822.6,900.5 L824.8,980.0 L834.1,980.0 L834.1,900.5 L836.3,980.0 L838.1,980.0 L838.1,900.5 L840.3,980.0 L855.6,980.0 L855.6,900.5 L857.8,980.0 L861.3,980.0 L861.3,869.2 L863.5,980.0 L863.5,980.0 L863.5,885.0 L865.7,980.0 L871.1,980.0 L871.1,900.5 L873.3,980.0 L890.7,980.0 L890.7,900.5 L892.9,980.0 L898.3,980.0 L898.3,869.2 L900.5,980.0 L904.0,980.0 L904.0,900.5 L906.2,980.0 L911.9,980.0 L911.9,900.5 L914.1,980.0 L921.5,980.0 L921.5,900.5 L923.7,980.0 L925.5,980.0 L925.5,885.0 L927.7,980.0 L927.5,980.0 L927.5,885.0 L929.7,980.0 L935.1,980.0 L935.1,869.2 L937.3,980.0 L939.0,980.0 L939.0,900.5 L941.2,980.0 L948.7,980.0 L948.7,900.5 L950.9,980.0 L950.9,980.0 L950.9,900.5 L953.1,980.0 L954.7,980.0 L954.7,885.0 L956.9,980.0 L956.6,980.0 L956.6,900.5 L958.8,980.0 L962.3,980.0 L962.3,869.2 L964.5,980.0 L969.9,980.0 L969.9,885.0 L972.1,980.0 L973.8,980.0 L973.8,900.5 L976.0,980.0 L980.0,980.0 L980.0,900.5 L982.2,980.0 L987.7,980.0 L987.7,900.5 L989.9,980.0 L1006.9,980.0 L1006.9,869.2 L1009.1,980.0 L1014.6,980.0 L1014.6,885.0 L1016.8,980.0 L1016.5,980.0 L1016.5,900.5 L1018.7,980.0 L1020.8,980.0 L1020.8,885.0 L1023.0,980.0 L1028.4,980.0 L1028.4,900.5 L1030.6,980.0 L1032.3,980.0 L1032.3,900.5 L1034.5,980.0 L1036.1,980.0 L1036.1,900.5 L1038.3,980.0 L1041.6,980.0 L1041.6,900.5 L1043.8,980.0 L1043.0,980.0 L1043.0,900.5 L1045.2,980.0 L1044.5,980.0 L1044.5,900.5 L1046.7,980.0 L1045.9,980.0 L1045.9,900.5 L1048.1,980.0 L1049.9,980.0 L1049.9,853.7 L1052.1,980.0 L1051.6,980.0 L1051.6,885.0 L1053.8,980.0 L1053.8,980.0 L1053.8,900.5 L1056.0,980.0 L1057.6,980.0 L1057.6,885.0 L1059.8,980.0 L1065.2,980.0 L1065.2,885.0 L1067.4,980.0 L1070.9,980.0 L1070.9,885.0 L1073.1,980.0 L1073.1,980.0 L1073.1,869.2 L1075.3,980.0 L1094.3,980.0 L1094.3,885.0 L1096.5,980.0 L1106.0,980.0 L1106.0,900.5 L1108.2,980.0 L1110.1,980.0 L1110.1,885.0 L1112.3,980.0 L1111.8,980.0 L1111.8,900.5 L1114.0,980.0 L1117.8,980.0 L1117.8,869.2 L1120.0,980.0 L1131.5,980.0 L1131.5,837.5 L1133.7,980.0 L1139.0,980.0 L1139.0,900.5 L1141.2,980.0 L1146.9,980.0 L1146.9,900.5 L1149.1,980.0 L1152.9,980.0 L1152.9,869.2 L1155.1,980.0 L1160.5,980.0 L1160.5,885.0 L1162.7,980.0 L1166.2,980.0 L1166.2,900.5 L1168.4,980.0 L1174.1,980.0 L1174.1,900.5 L1176.3,980.0 L1176.0,980.0 L1176.0,885.0 L1178.2,980.0 L1177.7,980.0 L1177.7,900.5 L1179.9,980.0 L1183.8,980.0 L1183.8,885.0 L1186.0,980.0 L1189.6,980.0 L1189.6,853.7 L1191.8,980.0 L1195.6,980.0 L1195.6,900.5 L1197.8,980.0 L1197.3,980.0 L1197.3,869.2 L1199.5,980.0 L1203.2,980.0 L1203.2,885.0 L1205.4,980.0 L1204.9,980.0 L1204.9,869.2 L1207.1,980.0 L1210.6,980.0 L1210.6,885.0 L1212.8,980.0 L1212.8,980.0 L1212.8,900.5 L1215.0,980.0 L1214.6,980.0 L1214.6,885.0 L1216.8,980.0 L1216.4,980.0 L1216.4,853.7 L1218.6,980.0 L1218.5,980.0 L1218.5,711.5 L1220.7,980.0 L1220.7,980.0 L1220.7,805.5 L1222.9,980.0 L1222.8,980.0 L1222.8,853.7 L1225.0,980.0 L1234.3,980.0 L1234.3,869.2 L1236.5,980.0 L1250.0,980.0 L1250.0,900.5 L1252.2,980.0 L1251.9,980.0 L1251.9,869.2 L1254.1,980.0 L1255.8,980.0 L1255.8,869.2 L1258.0,980.0 L1261.5,980.0 L1261.5,900.5 L1263.7,980.0 L1263.4,980.0 L1263.4,900.5 L1265.6,980.0 L1269.1,980.0 L1269.1,900.5 L1271.3,980.0 L1275.1,980.0 L1275.1,900.5 L1277.3,980.0 L1277.0,980.0 L1277.0,885.0 L1279.2,980.0 L1278.7,980.0 L1278.7,885.0 L1280.9,980.0 L1284.8,980.0 L1284.8,900.5 L1287.0,980.0 L1286.6,980.0 L1286.6,900.5 L1288.8,980.0 L1292.6,980.0 L1292.6,679.1 L1294.8,980.0 L1294.7,980.0 L1294.7,837.5 L1296.9,980.0 L1300.2,980.0 L1300.2,885.0 L1302.4,980.0 L1304.0,980.0 L1304.0,900.5 L1306.2,980.0 L1313.8,980.0 L1313.8,869.2 L1316.0,980.0 L1317.8,980.0 L1317.8,869.2 L1320.0,980.0 L1329.3,980.0 L1329.3,869.2 L1331.5,980.0 L1342.9,980.0 L1342.9,853.7 L1345.1,980.0 L1358.6,980.0 L1358.6,900.5 L1360.8,980.0 L1366.2,980.0 L1366.2,853.7 L1368.4,980.0 L1368.2,980.0 L1368.2,869.2 L1370.4,980.0 L1372.0,980.0 L1372.0,900.5 L1374.2,980.0 L1378.0,980.0 L1378.0,900.5 L1380.2,980.0 L1379.8,980.0 L1379.8,869.2 L1382.0,980.0 L1380.1,980.0 L1380.1,900.5 L1382.3,980.0 L1383.7,980.0 L1383.7,885.0 L1385.9,980.0 L1385.9,980.0 L1385.9,900.5 L1388.1,980.0 L1387.7,980.0 L1387.7,885.0 L1389.9,980.0 L1395.2,980.0 L1395.2,900.5 L1397.4,980.0 L1396.6,980.0 L1396.6,900.5 L1398.8,980.0 L1398.0,980.0 L1398.0,900.5 L1400.2,980.0 L1399.5,980.0 L1399.5,885.0 L1401.7,980.0 L1400.9,980.0 L1400.9,885.0 L1403.1,980.0 L1403.0,980.0 L1403.0,900.5 L1405.2,980.0 L1410.9,980.0 L1410.9,900.5 L1413.1,980.0 L1412.8,980.0 L1412.8,885.0 L1415.0,980.0 L1416.7,980.0 L1416.7,885.0 L1418.9,980.0 L1424.5,980.0 L1424.5,900.5 L1426.7,980.0 L1428.1,980.0 L1428.1,900.5 L1430.3,980.0 L1430.2,980.0 L1430.2,900.5 L1432.4,980.0 L1432.4,980.0 L1432.4,900.5 L1434.6,980.0 L1443.9,980.0 L1443.9,900.5 L1446.1,980.0 L1445.7,980.0 L1445.7,837.5 L1447.9,980.0 L1448.2,980.0 L1448.2,869.2 L1450.4,980.0 L1451.8,980.0 L1451.8,900.5 L1454.0,980.0 L1453.6,980.0 L1453.6,869.2 L1455.8,980.0 L1467.1,980.0 L1467.1,900.5 L1469.3,980.0 L1471.1,980.0 L1471.1,869.2 L1473.3,980.0 L1475.0,980.0 L1475.0,885.0 L1477.2,980.0 L1480.8,980.0 L1480.8,869.2 L1483.0,980.0 L1488.3,980.0 L1488.3,900.5 L1490.5,980.0 L1490.4,980.0 L1490.4,900.5 L1492.6,980.0 L1496.2,980.0 L1496.2,900.5 L1498.4,980.0 L1498.3,980.0 L1498.3,900.5 L1500.5,980.0 L1500.5,980.0 L1500.5,900.5 L1502.7,980.0 L1511.9,980.0 L1511.9,869.2 L1514.1,980.0 L1513.8,980.0 L1513.8,869.2 L1516.0,980.0 L1517.7,980.0 L1517.7,869.2 L1519.9,980.0 L1519.8,980.0 L1519.8,900.5 L1522.0,980.0 L1533.1,980.0 L1533.1,885.0 L1535.3,980.0 L1535.3,980.0 L1535.3,900.5 L1537.5,980.0 L1540.9,980.0 L1540.9,885.0 L1543.1,980.0 L1556.3,980.0 L1556.3,900.5 L1558.5,980.0 L1558.5,980.0 L1558.5,869.2 L1560.7,980.0 L1559.9,980.0 L1559.9,900.5 L1562.1,980.0 L1562.8,980.0 L1562.8,885.0 L1565.0,980.0 L1564.2,980.0 L1564.2,885.0 L1566.4,980.0 L1570.0,980.0 L1570.0,900.5 L1572.2,980.0 L1572.1,980.0 L1572.1,900.5 L1574.3,980.0 L1577.8,980.0 L1577.8,885.0 L1580.0,980.0 L1581.8,980.0 L1581.8,885.0 L1584.0,980.0 L1591.4,980.0 L1591.4,900.5 L1593.6,980.0 L1593.6,980.0 L1593.6,900.5 L1595.8,980.0 L1599.3,980.0 L1599.3,885.0 L1601.5,980.0 L1606.9,980.0 L1606.9,885.0 L1609.1,980.0 L1610.8,980.0 L1610.8,869.2 L1613.0,980.0 L1612.9,980.0 L1612.9,836.8 L1615.1,980.0 L1614.8,980.0 L1614.8,821.3 L1617.0,980.0 L1617.2,980.0 L1617.2,900.5 L1619.4,980.0 L1638.0,980.0 L1638.0,900.5 L1640.2,980.0 L1678.8,980.0 L1678.8,885.0 L1681.0,980.0 L1681.0,980.0 L1681.0,869.2 L1683.2,980.0 L1686.4,980.0 L1686.4,869.2 L1688.6,980.0 L1694.3,980.0 L1694.3,900.5 L1696.5,980.0 L1705.8,980.0 L1705.8,900.5 L1708.0,980.0 L1709.8,980.0 L1709.8,885.0 L1712.0,980.0 L1715.8,980.0 L1715.8,869.2 L1718.0,980.0 L1717.5,980.0 L1717.5,900.5 L1719.7,980.0 L1731.1,980.0 L1731.1,869.2 L1733.3,980.0 L1737.0,980.0 L1737.0,869.2 L1739.2,980.0 L1738.7,980.0 L1738.7,900.5 L1740.9,980.0 L1752.6,980.0 L1752.6,869.2 L1754.8,980.0 L1760.2,980.0 L1760.2,885.0 L1762.4,980.0 L1781.7,980.0 L1781.7,900.5 L1783.9,980.0 L1783.9,980.0 L1783.9,900.5 L1786.1,980.0 L1789.6,980.0 L1789.6,900.5 L1791.8,980.0 L1822.3,980.0 L1822.3,900.5 L1824.5,980.0 L1826.1,980.0 L1826.1,885.0 L1828.3,980.0 L1849.8,980.0 L1849.8,900.5 L1852.0,980.0 L1851.7,980.0 L1851.7,900.5 L1853.9,980.0 L1853.6,980.0 L1853.6,869.2 L1855.8,980.0 L1855.5,980.0 L1855.5,900.5 L1857.7,980.0 L1861.2,980.0 L1861.2,900.5 L1863.4,980.0 L1871.0,980.0 L1871.0,900.5 L1873.2,980.0 L1877.0,980.0 L1877.0,900.5 L1879.2,980.0 L1886.6,980.0 L1886.6,900.5 L1888.8,980.0 L1913.5,980.0 L1913.5,900.5 L1915.7,980.0 L1915.7,980.0 L1915.7,900.5 L1917.9,980.0 L1919.5,980.0 L1919.5,900.5 L1921.7,980.0 L1921.8,980.0 L1921.8,900.5 L1924.0,980.0 L1927.1,980.0 L1927.1,900.5 L1929.3,980.0 L1929.3,980.0 L1929.3,900.5 L1931.5,980.0 L1935.0,980.0 L1935.0,869.2 L1937.2,980.0 L1936.9,980.0 L1936.9,900.5 L1939.1,980.0 L1942.9,980.0 L1942.9,900.5 L1945.1,980.0 L1945.0,980.0 L1945.0,900.5 L1947.2,980.0 L1950.8,980.0 L1950.8,885.0 L1953.0,980.0 L1958.2,980.0 L1958.2,900.5 L1960.4,980.0 L1960.1,980.0 L1960.1,900.5 L1962.3,980.0 L1970.1,980.0 L1970.1,900.5 L1972.3,980.0 L1972.0,980.0 L1972.0,885.0 L1974.2,980.0 L1987.3,980.0 L1987.3,869.2 L1989.5,980.0 L1993.3,980.0 L1993.3,900.5 L1995.5,980.0 L1996.9,980.0 L1996.9,869.2 L1999.1,980.0 L2000.9,980.0 L2000.9,885.0 L2003.1,980.0 L2003.1,980.0 L2003.1,900.5 L2005.3,980.0 L2008.8,980.0 L2008.8,900.5 L2011.0,980.0 L2012.7,980.0 L2012.7,869.2 L2014.9,980.0 L2024.1,980.0 L2024.1,885.0 L2026.3,980.0 L2039.4,980.0 L2039.4,900.5 L2041.6,980.0 L2042.0,980.0 L2042.0,900.5 L2044.2,980.0 L2045.7,980.0 L2045.7,869.2 L2047.9,980.0 L2051.5,980.0 L2051.5,900.5 L2053.7,980.0 L2055.3,980.0 L2055.3,885.0 L2057.5,980.0 L2057.1,980.0 L2057.1,869.2 L2059.3,980.0 L2067.0,980.0 L2067.0,885.0 L2069.2,980.0 L2068.9,980.0 L2068.9,900.5 L2071.1,980.0 L2082.5,980.0 L2082.5,869.2 L2084.7,980.0 L2090.1,980.0 L2090.1,885.0 L2092.3,980.0 L2095.9,980.0 L2095.9,885.0 L2098.1,980.0 L2103.8,980.0 L2103.8,900.5 L2106.0,980.0 L2106.3,980.0 L2106.3,900.5 L2108.5,980.0 L2111.6,980.0 L2111.6,885.0 L2113.8,980.0 L2117.4,980.0 L2117.4,885.0 L2119.6,980.0 L2119.7,980.0 L2119.7,900.5 L2121.9,980.0 L2125.0,980.0 L2125.0,900.5 L2127.2,980.0 L2140.9,980.0 L2140.9,869.2 L2143.1,980.0 L2148.4,980.0 L2148.4,869.2 L2150.6,980.0 L2154.5,980.0 L2154.5,900.5 L2156.7,980.0 L2171.9,980.0 L2171.9,900.5 L2174.1,980.0 L2178.0,980.0 L2178.0,900.5 L2180.2,980.0 L2179.8,980.0 L2179.8,900.5 L2182.0,980.0 L2183.6,980.0 L2183.6,869.2 L2185.8,980.0 L2199.2,980.0 L2199.2,900.5 L2201.4,980.0 L2204.9,980.0 L2204.9,885.0 L2207.1,980.0 L2206.7,980.0 L2206.7,900.5 L2208.9,980.0 L2214.3,980.0 L2214.3,900.5 L2216.5,980.0 L2220.1,980.0 L2220.1,900.5 L2222.3,980.0 L2222.2,980.0 L2222.2,900.5 L2224.4,980.0 L2229.8,980.0 L2229.8,900.5 L2232.0,980.0 L2241.9,980.0 L2241.9,900.5 L2244.1,980.0 L2251.4,980.0 L2251.4,885.0 L2253.6,980.0 L2259.0,980.0 L2259.0,900.5 L2261.2,980.0 L2271.1,980.0 L2271.1,900.5 L2273.3,980.0 L2272.9,980.0 L2272.9,869.2 L2275.1,980.0 L2274.9,980.0 L2274.9,885.0 L2277.1,980.0 L2278.7,980.0 L2278.7,900.5 L2280.9,980.0 L2281.0,980.0 L2281.0,900.5 L2283.2,980.0 L2286.2,980.0 L2286.2,900.5 L2288.4,980.0 L2290.0,980.0 L2290.0,900.5 L2292.2,980.0 L2294.1,980.0 L2294.1,900.5 L2296.3,980.0 L2309.7,980.0 L2309.7,900.5 L2311.9,980.0 L2315.5,980.0 L2315.5,869.2 L2317.7,980.0 L2317.6,980.0 L2317.6,900.5 L2319.8,980.0 L2323.4,980.0 L2323.4,853.7 L2325.6,980.0 L2328.6,980.0 L2328.6,900.5 L2330.8,980.0 L2330.9,980.0 L2330.9,900.5 L2333.1,980.0 L2338.8,980.0 L2338.8,900.5 L2341.0,980.0 L2341.1,980.0 L2341.1,900.5 L2343.3,980.0 L2344.9,980.0 L2344.9,900.5 L2347.1,980.0 L2348.6,980.0 L2348.6,900.5 L2350.8,980.0 L2359.7,980.0 L2359.7,900.5 L2361.9,980.0 L2362.0,980.0 L2362.0,900.5 L2364.2,980.0 L2368.0,980.0 L2368.0,885.0 L2370.2,980.0 L2373.6,980.0 L2373.6,900.5 L2375.8,980.0 L2381.7,980.0 L2381.7,900.5 L2383.9,980.0 L2388,980.0"/>
<line x1="110" x2="2279" y1="723.4" y2="723.4" stroke="#455a64" stroke-width="1.5"/>
<rect x="2279" y="686" width="109" height="38" fill="#455a64"/>
<text x="2334" y="711.3" font-family="Liberation Sans, sans-serif" font-size="22" fill="#fff" text-anchor="middle">712.1 nA</text>
<line x1="247.6" x2="247.6" y1="620" y2="980" stroke="#455a64" stroke-width="1.5"/>
<rect x="248" y="620" width="107" height="62" fill="#455a64"/>
<text x="301.5" y="645.2" font-family="Liberation Sans, sans-serif" font-size="22" fill="#fff" text-anchor="middle">00:00:25</text>
<text x="301.5" y="673.3" font-family="Liberation Sans, sans-serif" font-size="22" fill="#fff" text-anchor="middle">423.866</text></svg></body></html>
